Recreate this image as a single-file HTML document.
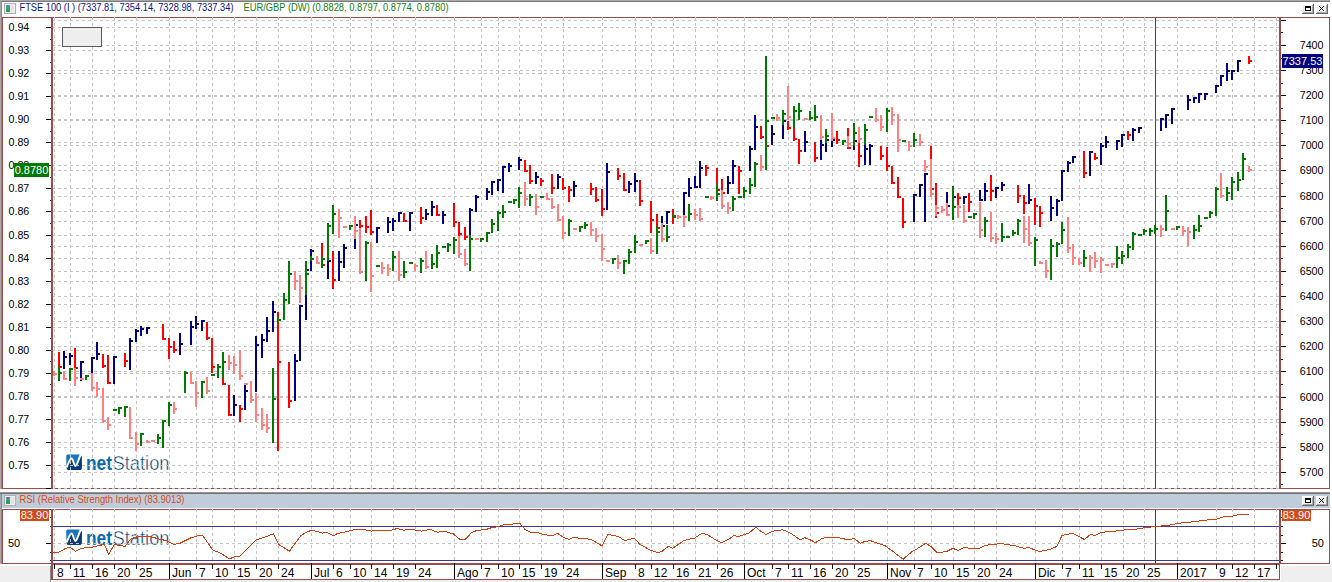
<!DOCTYPE html>
<html><head><meta charset='utf-8'><style>html,body{margin:0;padding:0;background:#fff;overflow:hidden}svg{display:block}</style></head>
<body><svg width='1332' height='582' viewBox='0 0 1332 582' font-family='Liberation Sans, sans-serif' shape-rendering='crispEdges'>
<rect x='0' y='0' width='1332' height='582' fill='#ffffff' />
<rect x='0' y='566' width='51' height='16' fill='#efefef' />
<rect x='50' y='566' width='1' height='16' fill='#8a8a8a' />
<rect x='1281' y='566' width='51' height='16' fill='#efefef' />
<rect x='52' y='580' width='1229' height='2' fill='#efefef' />
<rect x='0' y='0' width='1330' height='1' fill='#a8a8a8' />
<rect x='0' y='1' width='1330' height='1' fill='#7a7a7a' />
<rect x='0' y='0' width='1' height='489' fill='#a8a8a8' />
<rect x='1' y='1' width='1' height='488' fill='#8a8a8a' />
<rect x='0' y='494' width='1' height='70' fill='#a8a8a8' />
<rect x='1' y='494' width='1' height='70' fill='#8a8a8a' />
<rect x='4.5' y='3.5' width='11' height='10' fill='#f0f0f0' stroke='#aab0b6' stroke-width='1'/>
<defs><linearGradient id='ig3' x1='0' y1='0' x2='0' y2='1'><stop offset='0' stop-color='#5a8ab8'/><stop offset='1' stop-color='#30a040'/></linearGradient></defs>
<rect x='6.0' y='5.0' width='4' height='7' fill='url(#ig3)' />
<rect x='10.0' y='5.0' width='4' height='7' fill='#e4e4e4' />
<text x='19.5' y='11.2' font-size='10' fill='#10108a' text-anchor='start' font-weight='normal' textLength='214' lengthAdjust='spacingAndGlyphs' >FTSE 100 (I ) (7337.81, 7354.14, 7328.98, 7337.34)</text>
<text x='243.5' y='11.2' font-size='10' fill='#108010' text-anchor='start' font-weight='normal' textLength='205' lengthAdjust='spacingAndGlyphs' >EUR/GBP (DW) (0.8828, 0.8797, 0.8774, 0.8780)</text>
<rect x='1302' y='4' width='12' height='10' fill='#f0f0f0' />
<rect x='1302' y='4' width='12' height='1' fill='#ffffff' />
<rect x='1302' y='4' width='1' height='10' fill='#ffffff' />
<rect x='1303' y='12' width='10' height='1' fill='#a8a8a8' />
<rect x='1312' y='5' width='1' height='8' fill='#a8a8a8' />
<rect x='1302' y='13' width='12' height='1' fill='#6a6a6a' />
<rect x='1313' y='4' width='1' height='10' fill='#6a6a6a' />
<rect x='1305' y='6' width='6' height='5' fill='#000000' />
<rect x='1306' y='8' width='4' height='2' fill='#ffffff' />
<rect x='1316' y='4' width='12' height='10' fill='#f0f0f0' />
<rect x='1316' y='4' width='12' height='1' fill='#ffffff' />
<rect x='1316' y='4' width='1' height='10' fill='#ffffff' />
<rect x='1317' y='12' width='10' height='1' fill='#a8a8a8' />
<rect x='1326' y='5' width='1' height='8' fill='#a8a8a8' />
<rect x='1316' y='13' width='12' height='1' fill='#6a6a6a' />
<rect x='1327' y='4' width='1' height='10' fill='#6a6a6a' />
<rect x='1319' y='6' width='1' height='1' fill='#000000' />
<rect x='1323' y='6' width='1' height='1' fill='#000000' />
<rect x='1320' y='7' width='1' height='1' fill='#000000' />
<rect x='1322' y='7' width='1' height='1' fill='#000000' />
<rect x='1321' y='8' width='1' height='1' fill='#000000' />
<rect x='1321' y='8' width='1' height='1' fill='#000000' />
<rect x='1322' y='9' width='1' height='1' fill='#000000' />
<rect x='1320' y='9' width='1' height='1' fill='#000000' />
<rect x='1323' y='10' width='1' height='1' fill='#000000' />
<rect x='1319' y='10' width='1' height='1' fill='#000000' />
<line x1='2' y1='17.5' x2='1330' y2='17.5' stroke='#9d4a4a' stroke-width='1'/>
<line x1='2.5' y1='17' x2='2.5' y2='489' stroke='#9d4a4a' stroke-width='1'/>
<line x1='1329.5' y1='17' x2='1329.5' y2='489' stroke='#9d4a4a' stroke-width='1'/>
<rect x='51' y='17' width='2' height='472' fill='#9d4a4a' />
<rect x='1279' y='17' width='2' height='472' fill='#9d4a4a' />
<line x1='2' y1='488.5' x2='51' y2='488.5' stroke='#9d4a4a' stroke-width='1'/>
<line x1='1281' y1='488.5' x2='1330' y2='488.5' stroke='#9d4a4a' stroke-width='1'/>
<path d='M67.50,454.50 L79.60,454.50 L81.80,457.10 L81.80,468.10 Q81.80,469.90 80.00,469.90 L68.50,469.90 Q66.40,469.90 66.40,467.50 L66.20,456.50 Q66.20,454.50 67.50,454.50 Z' fill='#1976be' shape-rendering='geometricPrecision'/>
<path d='M66.50,467.50 C69.00,462.00 70.00,458.50 71.50,458.50 C73.00,458.50 74.00,466.00 75.50,466.00 C77.00,466.00 79.00,458.00 80.80,454.50 L81.80,457.10 L81.80,468.10 Q81.80,469.90 80.00,469.90 L68.50,469.90 Q66.80,469.90 66.50,467.50 Z' fill='#073b7a' shape-rendering='geometricPrecision'/>
<path d='M66.50,467.50 C69.00,462.00 70.00,458.50 71.50,458.50 C73.00,458.50 74.00,466.00 75.50,466.00 C77.00,466.00 79.00,458.00 80.80,454.50' stroke='#ffffff' stroke-width='1.9' fill='none' shape-rendering='geometricPrecision'/>
<text x='86' y='469.7' font-size='20.5' fill='#0a6ab2' text-anchor='start' font-weight='bold' textLength='26' lengthAdjust='spacingAndGlyphs' >net</text>
<text x='112.5' y='469.7' font-size='20.5' fill='#0a3a72' text-anchor='start' font-weight='normal' textLength='57' lengthAdjust='spacingAndGlyphs' stroke='#ffffff' stroke-width='0.45'>Station</text>
<line x1='53' y1='465.5' x2='1279' y2='465.5' stroke='#c4c4c4' stroke-width='1' stroke-dasharray='3,3' stroke-dashoffset='1'/>
<line x1='53' y1='442.5' x2='1279' y2='442.5' stroke='#c4c4c4' stroke-width='1' stroke-dasharray='3,3' stroke-dashoffset='1'/>
<line x1='53' y1='419.5' x2='1279' y2='419.5' stroke='#c4c4c4' stroke-width='1' stroke-dasharray='3,3' stroke-dashoffset='1'/>
<line x1='53' y1='396.5' x2='1279' y2='396.5' stroke='#c4c4c4' stroke-width='1' stroke-dasharray='3,3' stroke-dashoffset='1'/>
<line x1='53' y1='373.5' x2='1279' y2='373.5' stroke='#c4c4c4' stroke-width='1' stroke-dasharray='3,3' stroke-dashoffset='1'/>
<line x1='53' y1='350.5' x2='1279' y2='350.5' stroke='#c4c4c4' stroke-width='1' stroke-dasharray='3,3' stroke-dashoffset='1'/>
<line x1='53' y1='327.5' x2='1279' y2='327.5' stroke='#c4c4c4' stroke-width='1' stroke-dasharray='3,3' stroke-dashoffset='1'/>
<line x1='53' y1='304.5' x2='1279' y2='304.5' stroke='#c4c4c4' stroke-width='1' stroke-dasharray='3,3' stroke-dashoffset='1'/>
<line x1='53' y1='281.5' x2='1279' y2='281.5' stroke='#c4c4c4' stroke-width='1' stroke-dasharray='3,3' stroke-dashoffset='1'/>
<line x1='53' y1='258.5' x2='1279' y2='258.5' stroke='#c4c4c4' stroke-width='1' stroke-dasharray='3,3' stroke-dashoffset='1'/>
<line x1='53' y1='235.5' x2='1279' y2='235.5' stroke='#c4c4c4' stroke-width='1' stroke-dasharray='3,3' stroke-dashoffset='1'/>
<line x1='53' y1='211.5' x2='1279' y2='211.5' stroke='#c4c4c4' stroke-width='1' stroke-dasharray='3,3' stroke-dashoffset='1'/>
<line x1='53' y1='188.5' x2='1279' y2='188.5' stroke='#c4c4c4' stroke-width='1' stroke-dasharray='3,3' stroke-dashoffset='1'/>
<line x1='53' y1='165.5' x2='1279' y2='165.5' stroke='#c4c4c4' stroke-width='1' stroke-dasharray='3,3' stroke-dashoffset='1'/>
<line x1='53' y1='142.5' x2='1279' y2='142.5' stroke='#c4c4c4' stroke-width='1' stroke-dasharray='3,3' stroke-dashoffset='1'/>
<line x1='53' y1='119.5' x2='1279' y2='119.5' stroke='#c4c4c4' stroke-width='1' stroke-dasharray='3,3' stroke-dashoffset='1'/>
<line x1='53' y1='96.5' x2='1279' y2='96.5' stroke='#c4c4c4' stroke-width='1' stroke-dasharray='3,3' stroke-dashoffset='1'/>
<line x1='53' y1='73.5' x2='1279' y2='73.5' stroke='#c4c4c4' stroke-width='1' stroke-dasharray='3,3' stroke-dashoffset='1'/>
<line x1='53' y1='50.5' x2='1279' y2='50.5' stroke='#c4c4c4' stroke-width='1' stroke-dasharray='3,3' stroke-dashoffset='1'/>
<line x1='53' y1='27.5' x2='1279' y2='27.5' stroke='#c4c4c4' stroke-width='1' stroke-dasharray='3,3' stroke-dashoffset='1'/>
<line x1='53' y1='472.5' x2='1279' y2='472.5' stroke='#c4c4c4' stroke-width='1' stroke-dasharray='3,3' stroke-dashoffset='1'/>
<line x1='53' y1='447.5' x2='1279' y2='447.5' stroke='#c4c4c4' stroke-width='1' stroke-dasharray='3,3' stroke-dashoffset='1'/>
<line x1='53' y1='422.5' x2='1279' y2='422.5' stroke='#c4c4c4' stroke-width='1' stroke-dasharray='3,3' stroke-dashoffset='1'/>
<line x1='53' y1='397.5' x2='1279' y2='397.5' stroke='#c4c4c4' stroke-width='1' stroke-dasharray='3,3' stroke-dashoffset='1'/>
<line x1='53' y1='371.5' x2='1279' y2='371.5' stroke='#c4c4c4' stroke-width='1' stroke-dasharray='3,3' stroke-dashoffset='1'/>
<line x1='53' y1='346.5' x2='1279' y2='346.5' stroke='#c4c4c4' stroke-width='1' stroke-dasharray='3,3' stroke-dashoffset='1'/>
<line x1='53' y1='321.5' x2='1279' y2='321.5' stroke='#c4c4c4' stroke-width='1' stroke-dasharray='3,3' stroke-dashoffset='1'/>
<line x1='53' y1='296.5' x2='1279' y2='296.5' stroke='#c4c4c4' stroke-width='1' stroke-dasharray='3,3' stroke-dashoffset='1'/>
<line x1='53' y1='271.5' x2='1279' y2='271.5' stroke='#c4c4c4' stroke-width='1' stroke-dasharray='3,3' stroke-dashoffset='1'/>
<line x1='53' y1='246.5' x2='1279' y2='246.5' stroke='#c4c4c4' stroke-width='1' stroke-dasharray='3,3' stroke-dashoffset='1'/>
<line x1='53' y1='221.5' x2='1279' y2='221.5' stroke='#c4c4c4' stroke-width='1' stroke-dasharray='3,3' stroke-dashoffset='1'/>
<line x1='53' y1='196.5' x2='1279' y2='196.5' stroke='#c4c4c4' stroke-width='1' stroke-dasharray='3,3' stroke-dashoffset='1'/>
<line x1='53' y1='170.5' x2='1279' y2='170.5' stroke='#c4c4c4' stroke-width='1' stroke-dasharray='3,3' stroke-dashoffset='1'/>
<line x1='53' y1='145.5' x2='1279' y2='145.5' stroke='#c4c4c4' stroke-width='1' stroke-dasharray='3,3' stroke-dashoffset='1'/>
<line x1='53' y1='120.5' x2='1279' y2='120.5' stroke='#c4c4c4' stroke-width='1' stroke-dasharray='3,3' stroke-dashoffset='1'/>
<line x1='53' y1='95.5' x2='1279' y2='95.5' stroke='#c4c4c4' stroke-width='1' stroke-dasharray='3,3' stroke-dashoffset='1'/>
<line x1='53' y1='70.5' x2='1279' y2='70.5' stroke='#c4c4c4' stroke-width='1' stroke-dasharray='3,3' stroke-dashoffset='1'/>
<line x1='53' y1='45.5' x2='1279' y2='45.5' stroke='#c4c4c4' stroke-width='1' stroke-dasharray='3,3' stroke-dashoffset='1'/>
<line x1='53' y1='20.5' x2='1279' y2='20.5' stroke='#c4c4c4' stroke-width='1' stroke-dasharray='3,3' stroke-dashoffset='1'/>
<line x1='54.5' y1='17' x2='54.5' y2='488' stroke='#c4c4c4' stroke-width='1' stroke-dasharray='3,3' stroke-dashoffset='0'/>
<line x1='70.5' y1='17' x2='70.5' y2='488' stroke='#c4c4c4' stroke-width='1' stroke-dasharray='3,3' stroke-dashoffset='0'/>
<line x1='92.5' y1='17' x2='92.5' y2='488' stroke='#c4c4c4' stroke-width='1' stroke-dasharray='3,3' stroke-dashoffset='0'/>
<line x1='114.5' y1='17' x2='114.5' y2='488' stroke='#c4c4c4' stroke-width='1' stroke-dasharray='3,3' stroke-dashoffset='0'/>
<line x1='136.5' y1='17' x2='136.5' y2='488' stroke='#c4c4c4' stroke-width='1' stroke-dasharray='3,3' stroke-dashoffset='0'/>
<line x1='169.5' y1='17' x2='169.5' y2='488' stroke='#c4c4c4' stroke-width='1' stroke-dasharray='3,3' stroke-dashoffset='0'/>
<line x1='196.5' y1='17' x2='196.5' y2='488' stroke='#c4c4c4' stroke-width='1' stroke-dasharray='3,3' stroke-dashoffset='0'/>
<line x1='212.5' y1='17' x2='212.5' y2='488' stroke='#c4c4c4' stroke-width='1' stroke-dasharray='3,3' stroke-dashoffset='0'/>
<line x1='234.5' y1='17' x2='234.5' y2='488' stroke='#c4c4c4' stroke-width='1' stroke-dasharray='3,3' stroke-dashoffset='0'/>
<line x1='256.5' y1='17' x2='256.5' y2='488' stroke='#c4c4c4' stroke-width='1' stroke-dasharray='3,3' stroke-dashoffset='0'/>
<line x1='278.5' y1='17' x2='278.5' y2='488' stroke='#c4c4c4' stroke-width='1' stroke-dasharray='3,3' stroke-dashoffset='0'/>
<line x1='311.5' y1='17' x2='311.5' y2='488' stroke='#c4c4c4' stroke-width='1' stroke-dasharray='3,3' stroke-dashoffset='0'/>
<line x1='333.5' y1='17' x2='333.5' y2='488' stroke='#c4c4c4' stroke-width='1' stroke-dasharray='3,3' stroke-dashoffset='0'/>
<line x1='350.5' y1='17' x2='350.5' y2='488' stroke='#c4c4c4' stroke-width='1' stroke-dasharray='3,3' stroke-dashoffset='0'/>
<line x1='371.5' y1='17' x2='371.5' y2='488' stroke='#c4c4c4' stroke-width='1' stroke-dasharray='3,3' stroke-dashoffset='0'/>
<line x1='393.5' y1='17' x2='393.5' y2='488' stroke='#c4c4c4' stroke-width='1' stroke-dasharray='3,3' stroke-dashoffset='0'/>
<line x1='415.5' y1='17' x2='415.5' y2='488' stroke='#c4c4c4' stroke-width='1' stroke-dasharray='3,3' stroke-dashoffset='0'/>
<line x1='454.5' y1='17' x2='454.5' y2='488' stroke='#c4c4c4' stroke-width='1' stroke-dasharray='3,3' stroke-dashoffset='0'/>
<line x1='481.5' y1='17' x2='481.5' y2='488' stroke='#c4c4c4' stroke-width='1' stroke-dasharray='3,3' stroke-dashoffset='0'/>
<line x1='498.5' y1='17' x2='498.5' y2='488' stroke='#c4c4c4' stroke-width='1' stroke-dasharray='3,3' stroke-dashoffset='0'/>
<line x1='519.5' y1='17' x2='519.5' y2='488' stroke='#c4c4c4' stroke-width='1' stroke-dasharray='3,3' stroke-dashoffset='0'/>
<line x1='541.5' y1='17' x2='541.5' y2='488' stroke='#c4c4c4' stroke-width='1' stroke-dasharray='3,3' stroke-dashoffset='0'/>
<line x1='563.5' y1='17' x2='563.5' y2='488' stroke='#c4c4c4' stroke-width='1' stroke-dasharray='3,3' stroke-dashoffset='0'/>
<line x1='602.5' y1='17' x2='602.5' y2='488' stroke='#c4c4c4' stroke-width='1' stroke-dasharray='3,3' stroke-dashoffset='0'/>
<line x1='635.5' y1='17' x2='635.5' y2='488' stroke='#c4c4c4' stroke-width='1' stroke-dasharray='3,3' stroke-dashoffset='0'/>
<line x1='651.5' y1='17' x2='651.5' y2='488' stroke='#c4c4c4' stroke-width='1' stroke-dasharray='3,3' stroke-dashoffset='0'/>
<line x1='673.5' y1='17' x2='673.5' y2='488' stroke='#c4c4c4' stroke-width='1' stroke-dasharray='3,3' stroke-dashoffset='0'/>
<line x1='695.5' y1='17' x2='695.5' y2='488' stroke='#c4c4c4' stroke-width='1' stroke-dasharray='3,3' stroke-dashoffset='0'/>
<line x1='717.5' y1='17' x2='717.5' y2='488' stroke='#c4c4c4' stroke-width='1' stroke-dasharray='3,3' stroke-dashoffset='0'/>
<line x1='744.5' y1='17' x2='744.5' y2='488' stroke='#c4c4c4' stroke-width='1' stroke-dasharray='3,3' stroke-dashoffset='0'/>
<line x1='772.5' y1='17' x2='772.5' y2='488' stroke='#c4c4c4' stroke-width='1' stroke-dasharray='3,3' stroke-dashoffset='0'/>
<line x1='788.5' y1='17' x2='788.5' y2='488' stroke='#c4c4c4' stroke-width='1' stroke-dasharray='3,3' stroke-dashoffset='0'/>
<line x1='810.5' y1='17' x2='810.5' y2='488' stroke='#c4c4c4' stroke-width='1' stroke-dasharray='3,3' stroke-dashoffset='0'/>
<line x1='832.5' y1='17' x2='832.5' y2='488' stroke='#c4c4c4' stroke-width='1' stroke-dasharray='3,3' stroke-dashoffset='0'/>
<line x1='854.5' y1='17' x2='854.5' y2='488' stroke='#c4c4c4' stroke-width='1' stroke-dasharray='3,3' stroke-dashoffset='0'/>
<line x1='887.5' y1='17' x2='887.5' y2='488' stroke='#c4c4c4' stroke-width='1' stroke-dasharray='3,3' stroke-dashoffset='0'/>
<line x1='914.5' y1='17' x2='914.5' y2='488' stroke='#c4c4c4' stroke-width='1' stroke-dasharray='3,3' stroke-dashoffset='0'/>
<line x1='931.5' y1='17' x2='931.5' y2='488' stroke='#c4c4c4' stroke-width='1' stroke-dasharray='3,3' stroke-dashoffset='0'/>
<line x1='953.5' y1='17' x2='953.5' y2='488' stroke='#c4c4c4' stroke-width='1' stroke-dasharray='3,3' stroke-dashoffset='0'/>
<line x1='974.5' y1='17' x2='974.5' y2='488' stroke='#c4c4c4' stroke-width='1' stroke-dasharray='3,3' stroke-dashoffset='0'/>
<line x1='996.5' y1='17' x2='996.5' y2='488' stroke='#c4c4c4' stroke-width='1' stroke-dasharray='3,3' stroke-dashoffset='0'/>
<line x1='1035.5' y1='17' x2='1035.5' y2='488' stroke='#c4c4c4' stroke-width='1' stroke-dasharray='3,3' stroke-dashoffset='0'/>
<line x1='1062.5' y1='17' x2='1062.5' y2='488' stroke='#c4c4c4' stroke-width='1' stroke-dasharray='3,3' stroke-dashoffset='0'/>
<line x1='1079.5' y1='17' x2='1079.5' y2='488' stroke='#c4c4c4' stroke-width='1' stroke-dasharray='3,3' stroke-dashoffset='0'/>
<line x1='1101.5' y1='17' x2='1101.5' y2='488' stroke='#c4c4c4' stroke-width='1' stroke-dasharray='3,3' stroke-dashoffset='0'/>
<line x1='1123.5' y1='17' x2='1123.5' y2='488' stroke='#c4c4c4' stroke-width='1' stroke-dasharray='3,3' stroke-dashoffset='0'/>
<line x1='1144.5' y1='17' x2='1144.5' y2='488' stroke='#c4c4c4' stroke-width='1' stroke-dasharray='3,3' stroke-dashoffset='0'/>
<line x1='1177.5' y1='17' x2='1177.5' y2='488' stroke='#c4c4c4' stroke-width='1' stroke-dasharray='3,3' stroke-dashoffset='0'/>
<line x1='1216.5' y1='17' x2='1216.5' y2='488' stroke='#c4c4c4' stroke-width='1' stroke-dasharray='3,3' stroke-dashoffset='0'/>
<line x1='1232.5' y1='17' x2='1232.5' y2='488' stroke='#c4c4c4' stroke-width='1' stroke-dasharray='3,3' stroke-dashoffset='0'/>
<line x1='1254.5' y1='17' x2='1254.5' y2='488' stroke='#c4c4c4' stroke-width='1' stroke-dasharray='3,3' stroke-dashoffset='0'/>
<line x1='1276.5' y1='17' x2='1276.5' y2='488' stroke='#c4c4c4' stroke-width='1' stroke-dasharray='3,3' stroke-dashoffset='0'/>
<line x1='53' y1='488.5' x2='1279' y2='488.5' stroke='#c4c4c4' stroke-width='1' stroke-dasharray='3,3' stroke-dashoffset='1'/>
<line x1='53' y1='488.5' x2='1279' y2='488.5' stroke='#9d4a4a' stroke-width='1' stroke-dasharray='3,3' stroke-dashoffset='4'/>
<line x1='46' y1='465.5' x2='51' y2='465.5' stroke='#000' stroke-width='1'/>
<line x1='50' y1='453.5' x2='51' y2='453.5' stroke='#000' stroke-width='1'/>
<text x='8.5' y='469' font-size='10.7' fill='#000' text-anchor='start' font-weight='normal' >0.75</text>
<line x1='46' y1='442.5' x2='51' y2='442.5' stroke='#000' stroke-width='1'/>
<line x1='50' y1='430.5' x2='51' y2='430.5' stroke='#000' stroke-width='1'/>
<text x='8.5' y='446' font-size='10.7' fill='#000' text-anchor='start' font-weight='normal' >0.76</text>
<line x1='46' y1='419.5' x2='51' y2='419.5' stroke='#000' stroke-width='1'/>
<line x1='50' y1='407.5' x2='51' y2='407.5' stroke='#000' stroke-width='1'/>
<text x='8.5' y='423' font-size='10.7' fill='#000' text-anchor='start' font-weight='normal' >0.77</text>
<line x1='46' y1='396.5' x2='51' y2='396.5' stroke='#000' stroke-width='1'/>
<line x1='50' y1='384.5' x2='51' y2='384.5' stroke='#000' stroke-width='1'/>
<text x='8.5' y='400' font-size='10.7' fill='#000' text-anchor='start' font-weight='normal' >0.78</text>
<line x1='46' y1='373.5' x2='51' y2='373.5' stroke='#000' stroke-width='1'/>
<line x1='50' y1='361.5' x2='51' y2='361.5' stroke='#000' stroke-width='1'/>
<text x='8.5' y='377' font-size='10.7' fill='#000' text-anchor='start' font-weight='normal' >0.79</text>
<line x1='46' y1='350.5' x2='51' y2='350.5' stroke='#000' stroke-width='1'/>
<line x1='50' y1='338.5' x2='51' y2='338.5' stroke='#000' stroke-width='1'/>
<text x='8.5' y='354' font-size='10.7' fill='#000' text-anchor='start' font-weight='normal' >0.80</text>
<line x1='46' y1='327.5' x2='51' y2='327.5' stroke='#000' stroke-width='1'/>
<line x1='50' y1='315.5' x2='51' y2='315.5' stroke='#000' stroke-width='1'/>
<text x='8.5' y='331' font-size='10.7' fill='#000' text-anchor='start' font-weight='normal' >0.81</text>
<line x1='46' y1='304.5' x2='51' y2='304.5' stroke='#000' stroke-width='1'/>
<line x1='50' y1='292.5' x2='51' y2='292.5' stroke='#000' stroke-width='1'/>
<text x='8.5' y='308' font-size='10.7' fill='#000' text-anchor='start' font-weight='normal' >0.82</text>
<line x1='46' y1='281.5' x2='51' y2='281.5' stroke='#000' stroke-width='1'/>
<line x1='50' y1='269.5' x2='51' y2='269.5' stroke='#000' stroke-width='1'/>
<text x='8.5' y='285' font-size='10.7' fill='#000' text-anchor='start' font-weight='normal' >0.83</text>
<line x1='46' y1='258.5' x2='51' y2='258.5' stroke='#000' stroke-width='1'/>
<line x1='50' y1='246.5' x2='51' y2='246.5' stroke='#000' stroke-width='1'/>
<text x='8.5' y='262' font-size='10.7' fill='#000' text-anchor='start' font-weight='normal' >0.84</text>
<line x1='46' y1='235.5' x2='51' y2='235.5' stroke='#000' stroke-width='1'/>
<line x1='50' y1='223.5' x2='51' y2='223.5' stroke='#000' stroke-width='1'/>
<text x='8.5' y='239' font-size='10.7' fill='#000' text-anchor='start' font-weight='normal' >0.85</text>
<line x1='46' y1='211.5' x2='51' y2='211.5' stroke='#000' stroke-width='1'/>
<line x1='50' y1='200.5' x2='51' y2='200.5' stroke='#000' stroke-width='1'/>
<text x='8.5' y='215' font-size='10.7' fill='#000' text-anchor='start' font-weight='normal' >0.86</text>
<line x1='46' y1='188.5' x2='51' y2='188.5' stroke='#000' stroke-width='1'/>
<line x1='50' y1='177.5' x2='51' y2='177.5' stroke='#000' stroke-width='1'/>
<text x='8.5' y='192' font-size='10.7' fill='#000' text-anchor='start' font-weight='normal' >0.87</text>
<line x1='46' y1='165.5' x2='51' y2='165.5' stroke='#000' stroke-width='1'/>
<line x1='50' y1='154.5' x2='51' y2='154.5' stroke='#000' stroke-width='1'/>
<text x='8.5' y='169' font-size='10.7' fill='#000' text-anchor='start' font-weight='normal' >0.88</text>
<line x1='46' y1='142.5' x2='51' y2='142.5' stroke='#000' stroke-width='1'/>
<line x1='50' y1='131.5' x2='51' y2='131.5' stroke='#000' stroke-width='1'/>
<text x='8.5' y='146' font-size='10.7' fill='#000' text-anchor='start' font-weight='normal' >0.89</text>
<line x1='46' y1='119.5' x2='51' y2='119.5' stroke='#000' stroke-width='1'/>
<line x1='50' y1='108.5' x2='51' y2='108.5' stroke='#000' stroke-width='1'/>
<text x='8.5' y='123' font-size='10.7' fill='#000' text-anchor='start' font-weight='normal' >0.90</text>
<line x1='46' y1='96.5' x2='51' y2='96.5' stroke='#000' stroke-width='1'/>
<line x1='50' y1='85.5' x2='51' y2='85.5' stroke='#000' stroke-width='1'/>
<text x='8.5' y='100' font-size='10.7' fill='#000' text-anchor='start' font-weight='normal' >0.91</text>
<line x1='46' y1='73.5' x2='51' y2='73.5' stroke='#000' stroke-width='1'/>
<line x1='50' y1='62.5' x2='51' y2='62.5' stroke='#000' stroke-width='1'/>
<text x='8.5' y='77' font-size='10.7' fill='#000' text-anchor='start' font-weight='normal' >0.92</text>
<line x1='46' y1='50.5' x2='51' y2='50.5' stroke='#000' stroke-width='1'/>
<line x1='50' y1='39.5' x2='51' y2='39.5' stroke='#000' stroke-width='1'/>
<text x='8.5' y='54' font-size='10.7' fill='#000' text-anchor='start' font-weight='normal' >0.93</text>
<line x1='46' y1='27.5' x2='51' y2='27.5' stroke='#000' stroke-width='1'/>
<text x='8.5' y='31' font-size='10.7' fill='#000' text-anchor='start' font-weight='normal' >0.94</text>
<line x1='50' y1='477.5' x2='51' y2='477.5' stroke='#000' stroke-width='1'/>
<line x1='46' y1='488.5' x2='51' y2='488.5' stroke='#000' stroke-width='1'/>
<line x1='1281' y1='472.5' x2='1286' y2='472.5' stroke='#000' stroke-width='1'/>
<text x='1323.5' y='476' font-size='10.7' fill='#000' text-anchor='end' font-weight='normal' >5700</text>
<line x1='1281' y1='459.5' x2='1283' y2='459.5' stroke='#000' stroke-width='1'/>
<line x1='1281' y1='447.5' x2='1286' y2='447.5' stroke='#000' stroke-width='1'/>
<text x='1323.5' y='451' font-size='10.7' fill='#000' text-anchor='end' font-weight='normal' >5800</text>
<line x1='1281' y1='434.5' x2='1283' y2='434.5' stroke='#000' stroke-width='1'/>
<line x1='1281' y1='422.5' x2='1286' y2='422.5' stroke='#000' stroke-width='1'/>
<text x='1323.5' y='426' font-size='10.7' fill='#000' text-anchor='end' font-weight='normal' >5900</text>
<line x1='1281' y1='409.5' x2='1283' y2='409.5' stroke='#000' stroke-width='1'/>
<line x1='1281' y1='397.5' x2='1286' y2='397.5' stroke='#000' stroke-width='1'/>
<text x='1323.5' y='401' font-size='10.7' fill='#000' text-anchor='end' font-weight='normal' >6000</text>
<line x1='1281' y1='384.5' x2='1283' y2='384.5' stroke='#000' stroke-width='1'/>
<line x1='1281' y1='371.5' x2='1286' y2='371.5' stroke='#000' stroke-width='1'/>
<text x='1323.5' y='375' font-size='10.7' fill='#000' text-anchor='end' font-weight='normal' >6100</text>
<line x1='1281' y1='359.5' x2='1283' y2='359.5' stroke='#000' stroke-width='1'/>
<line x1='1281' y1='346.5' x2='1286' y2='346.5' stroke='#000' stroke-width='1'/>
<text x='1323.5' y='350' font-size='10.7' fill='#000' text-anchor='end' font-weight='normal' >6200</text>
<line x1='1281' y1='334.5' x2='1283' y2='334.5' stroke='#000' stroke-width='1'/>
<line x1='1281' y1='321.5' x2='1286' y2='321.5' stroke='#000' stroke-width='1'/>
<text x='1323.5' y='325' font-size='10.7' fill='#000' text-anchor='end' font-weight='normal' >6300</text>
<line x1='1281' y1='309.5' x2='1283' y2='309.5' stroke='#000' stroke-width='1'/>
<line x1='1281' y1='296.5' x2='1286' y2='296.5' stroke='#000' stroke-width='1'/>
<text x='1323.5' y='300' font-size='10.7' fill='#000' text-anchor='end' font-weight='normal' >6400</text>
<line x1='1281' y1='284.5' x2='1283' y2='284.5' stroke='#000' stroke-width='1'/>
<line x1='1281' y1='271.5' x2='1286' y2='271.5' stroke='#000' stroke-width='1'/>
<text x='1323.5' y='275' font-size='10.7' fill='#000' text-anchor='end' font-weight='normal' >6500</text>
<line x1='1281' y1='258.5' x2='1283' y2='258.5' stroke='#000' stroke-width='1'/>
<line x1='1281' y1='246.5' x2='1286' y2='246.5' stroke='#000' stroke-width='1'/>
<text x='1323.5' y='250' font-size='10.7' fill='#000' text-anchor='end' font-weight='normal' >6600</text>
<line x1='1281' y1='233.5' x2='1283' y2='233.5' stroke='#000' stroke-width='1'/>
<line x1='1281' y1='221.5' x2='1286' y2='221.5' stroke='#000' stroke-width='1'/>
<text x='1323.5' y='225' font-size='10.7' fill='#000' text-anchor='end' font-weight='normal' >6700</text>
<line x1='1281' y1='208.5' x2='1283' y2='208.5' stroke='#000' stroke-width='1'/>
<line x1='1281' y1='196.5' x2='1286' y2='196.5' stroke='#000' stroke-width='1'/>
<text x='1323.5' y='200' font-size='10.7' fill='#000' text-anchor='end' font-weight='normal' >6800</text>
<line x1='1281' y1='183.5' x2='1283' y2='183.5' stroke='#000' stroke-width='1'/>
<line x1='1281' y1='170.5' x2='1286' y2='170.5' stroke='#000' stroke-width='1'/>
<text x='1323.5' y='174' font-size='10.7' fill='#000' text-anchor='end' font-weight='normal' >6900</text>
<line x1='1281' y1='158.5' x2='1283' y2='158.5' stroke='#000' stroke-width='1'/>
<line x1='1281' y1='145.5' x2='1286' y2='145.5' stroke='#000' stroke-width='1'/>
<text x='1323.5' y='149' font-size='10.7' fill='#000' text-anchor='end' font-weight='normal' >7000</text>
<line x1='1281' y1='133.5' x2='1283' y2='133.5' stroke='#000' stroke-width='1'/>
<line x1='1281' y1='120.5' x2='1286' y2='120.5' stroke='#000' stroke-width='1'/>
<text x='1323.5' y='124' font-size='10.7' fill='#000' text-anchor='end' font-weight='normal' >7100</text>
<line x1='1281' y1='108.5' x2='1283' y2='108.5' stroke='#000' stroke-width='1'/>
<line x1='1281' y1='95.5' x2='1286' y2='95.5' stroke='#000' stroke-width='1'/>
<text x='1323.5' y='99' font-size='10.7' fill='#000' text-anchor='end' font-weight='normal' >7200</text>
<line x1='1281' y1='83.5' x2='1283' y2='83.5' stroke='#000' stroke-width='1'/>
<line x1='1281' y1='70.5' x2='1286' y2='70.5' stroke='#000' stroke-width='1'/>
<text x='1323.5' y='74' font-size='10.7' fill='#000' text-anchor='end' font-weight='normal' >7300</text>
<line x1='1281' y1='58.5' x2='1283' y2='58.5' stroke='#000' stroke-width='1'/>
<line x1='1281' y1='45.5' x2='1286' y2='45.5' stroke='#000' stroke-width='1'/>
<text x='1323.5' y='49' font-size='10.7' fill='#000' text-anchor='end' font-weight='normal' >7400</text>
<line x1='1281' y1='32.5' x2='1283' y2='32.5' stroke='#000' stroke-width='1'/>
<line x1='1281' y1='20.5' x2='1286' y2='20.5' stroke='#000' stroke-width='1'/>
<line x1='1281' y1='484.5' x2='1283' y2='484.5' stroke='#000' stroke-width='1'/>
<rect x='62.5' y='27.5' width='39' height='19' fill='#eeeeee' stroke='#5a5a5a' stroke-width='1.2'/>
<rect x='58' y='352' width='2' height='16' fill='#ff0000'/>
<rect x='60' y='366' width='2' height='2' fill='#ff0000'/>
<rect x='63' y='351' width='2' height='18' fill='#000080'/>
<rect x='65' y='356' width='2' height='2' fill='#000080'/>
<rect x='69' y='353' width='2' height='12' fill='#000080'/>
<rect x='71' y='355' width='2' height='2' fill='#000080'/>
<rect x='74' y='348' width='2' height='21' fill='#ff0000'/>
<rect x='76' y='367' width='2' height='2' fill='#ff0000'/>
<rect x='80' y='361' width='2' height='20' fill='#000080'/>
<rect x='82' y='361' width='2' height='2' fill='#000080'/>
<rect x='91' y='357' width='2' height='16' fill='#000080'/>
<rect x='93' y='357' width='2' height='2' fill='#000080'/>
<rect x='96' y='342' width='2' height='18' fill='#000080'/>
<rect x='98' y='353' width='2' height='2' fill='#000080'/>
<rect x='102' y='354' width='2' height='14' fill='#ff0000'/>
<rect x='104' y='365' width='2' height='2' fill='#ff0000'/>
<rect x='107' y='355' width='2' height='29' fill='#ff0000'/>
<rect x='109' y='382' width='2' height='2' fill='#ff0000'/>
<rect x='113' y='356' width='2' height='28' fill='#000080'/>
<rect x='115' y='356' width='2' height='2' fill='#000080'/>
<rect x='124' y='353' width='2' height='14' fill='#ff0000'/>
<rect x='126' y='360' width='2' height='2' fill='#ff0000'/>
<rect x='129' y='338' width='2' height='32' fill='#000080'/>
<rect x='131' y='340' width='2' height='2' fill='#000080'/>
<rect x='135' y='329' width='2' height='13' fill='#000080'/>
<rect x='137' y='330' width='2' height='2' fill='#000080'/>
<rect x='140' y='326' width='2' height='10' fill='#000080'/>
<rect x='142' y='328' width='2' height='2' fill='#000080'/>
<rect x='146' y='327' width='2' height='7' fill='#000080'/>
<rect x='148' y='327' width='2' height='2' fill='#000080'/>
<rect x='162' y='324' width='2' height='16' fill='#ff0000'/>
<rect x='164' y='338' width='2' height='2' fill='#ff0000'/>
<rect x='168' y='338' width='2' height='21' fill='#ff0000'/>
<rect x='170' y='346' width='2' height='2' fill='#ff0000'/>
<rect x='173' y='341' width='2' height='12' fill='#ff0000'/>
<rect x='175' y='349' width='2' height='2' fill='#ff0000'/>
<rect x='179' y='333' width='2' height='22' fill='#000080'/>
<rect x='181' y='343' width='2' height='2' fill='#000080'/>
<rect x='190' y='321' width='2' height='24' fill='#000080'/>
<rect x='192' y='326' width='2' height='2' fill='#000080'/>
<rect x='195' y='316' width='2' height='13' fill='#000080'/>
<rect x='197' y='323' width='2' height='2' fill='#000080'/>
<rect x='201' y='320' width='2' height='11' fill='#000080'/>
<rect x='203' y='320' width='2' height='2' fill='#000080'/>
<rect x='206' y='322' width='2' height='18' fill='#ff0000'/>
<rect x='208' y='337' width='2' height='2' fill='#ff0000'/>
<rect x='211' y='338' width='2' height='35' fill='#ff0000'/>
<rect x='213' y='366' width='2' height='2' fill='#ff0000'/>
<rect x='222' y='378' width='2' height='7' fill='#ff0000'/>
<rect x='224' y='383' width='2' height='2' fill='#ff0000'/>
<rect x='228' y='385' width='2' height='31' fill='#ff0000'/>
<rect x='230' y='414' width='2' height='2' fill='#ff0000'/>
<rect x='233' y='395' width='2' height='21' fill='#000080'/>
<rect x='235' y='404' width='2' height='2' fill='#000080'/>
<rect x='239' y='405' width='2' height='17' fill='#ff0000'/>
<rect x='241' y='408' width='2' height='2' fill='#ff0000'/>
<rect x='244' y='384' width='2' height='26' fill='#000080'/>
<rect x='246' y='390' width='2' height='2' fill='#000080'/>
<rect x='255' y='336' width='2' height='56' fill='#000080'/>
<rect x='257' y='344' width='2' height='2' fill='#000080'/>
<rect x='261' y='334' width='2' height='24' fill='#000080'/>
<rect x='263' y='339' width='2' height='2' fill='#000080'/>
<rect x='266' y='317' width='2' height='25' fill='#000080'/>
<rect x='268' y='330' width='2' height='2' fill='#000080'/>
<rect x='272' y='301' width='2' height='31' fill='#000080'/>
<rect x='274' y='311' width='2' height='2' fill='#000080'/>
<rect x='277' y='312' width='2' height='139' fill='#ff0000'/>
<rect x='279' y='361' width='2' height='2' fill='#ff0000'/>
<rect x='288' y='362' width='2' height='46' fill='#ff0000'/>
<rect x='290' y='400' width='2' height='2' fill='#ff0000'/>
<rect x='294' y='354' width='2' height='47' fill='#000080'/>
<rect x='296' y='360' width='2' height='2' fill='#000080'/>
<rect x='299' y='305' width='2' height='56' fill='#000080'/>
<rect x='301' y='305' width='2' height='2' fill='#000080'/>
<rect x='305' y='268' width='2' height='52' fill='#000080'/>
<rect x='307' y='269' width='2' height='2' fill='#000080'/>
<rect x='310' y='249' width='2' height='22' fill='#000080'/>
<rect x='312' y='250' width='2' height='2' fill='#000080'/>
<rect x='321' y='243' width='2' height='23' fill='#ff0000'/>
<rect x='323' y='264' width='2' height='2' fill='#ff0000'/>
<rect x='327' y='260' width='2' height='19' fill='#000080'/>
<rect x='329' y='260' width='2' height='2' fill='#000080'/>
<rect x='332' y='251' width='2' height='38' fill='#ff0000'/>
<rect x='334' y='279' width='2' height='2' fill='#ff0000'/>
<rect x='338' y='251' width='2' height='30' fill='#000080'/>
<rect x='340' y='261' width='2' height='2' fill='#000080'/>
<rect x='343' y='244' width='2' height='24' fill='#000080'/>
<rect x='345' y='247' width='2' height='2' fill='#000080'/>
<rect x='354' y='224' width='2' height='25' fill='#000080'/>
<rect x='356' y='224' width='2' height='2' fill='#000080'/>
<rect x='359' y='220' width='2' height='13' fill='#ff0000'/>
<rect x='361' y='225' width='2' height='2' fill='#ff0000'/>
<rect x='365' y='216' width='2' height='17' fill='#ff0000'/>
<rect x='367' y='226' width='2' height='2' fill='#ff0000'/>
<rect x='370' y='210' width='2' height='25' fill='#ff0000'/>
<rect x='372' y='231' width='2' height='2' fill='#ff0000'/>
<rect x='376' y='227' width='2' height='16' fill='#000080'/>
<rect x='378' y='227' width='2' height='2' fill='#000080'/>
<rect x='387' y='217' width='2' height='16' fill='#000080'/>
<rect x='389' y='221' width='2' height='2' fill='#000080'/>
<rect x='392' y='218' width='2' height='13' fill='#000080'/>
<rect x='394' y='220' width='2' height='2' fill='#000080'/>
<rect x='398' y='212' width='2' height='10' fill='#000080'/>
<rect x='400' y='212' width='2' height='2' fill='#000080'/>
<rect x='403' y='213' width='2' height='9' fill='#ff0000'/>
<rect x='405' y='220' width='2' height='2' fill='#ff0000'/>
<rect x='409' y='212' width='2' height='19' fill='#000080'/>
<rect x='411' y='212' width='2' height='2' fill='#000080'/>
<rect x='420' y='207' width='2' height='17' fill='#ff0000'/>
<rect x='422' y='217' width='2' height='2' fill='#ff0000'/>
<rect x='425' y='209' width='2' height='11' fill='#000080'/>
<rect x='427' y='213' width='2' height='2' fill='#000080'/>
<rect x='431' y='201' width='2' height='15' fill='#000080'/>
<rect x='433' y='206' width='2' height='2' fill='#000080'/>
<rect x='436' y='205' width='2' height='11' fill='#ff0000'/>
<rect x='438' y='214' width='2' height='2' fill='#ff0000'/>
<rect x='442' y='211' width='2' height='13' fill='#000080'/>
<rect x='444' y='214' width='2' height='2' fill='#000080'/>
<rect x='453' y='203' width='2' height='24' fill='#ff0000'/>
<rect x='455' y='221' width='2' height='2' fill='#ff0000'/>
<rect x='458' y='222' width='2' height='14' fill='#ff0000'/>
<rect x='460' y='233' width='2' height='2' fill='#ff0000'/>
<rect x='464' y='227' width='2' height='13' fill='#ff0000'/>
<rect x='466' y='236' width='2' height='2' fill='#ff0000'/>
<rect x='469' y='208' width='2' height='28' fill='#000080'/>
<rect x='471' y='209' width='2' height='2' fill='#000080'/>
<rect x='475' y='195' width='2' height='17' fill='#000080'/>
<rect x='477' y='196' width='2' height='2' fill='#000080'/>
<rect x='486' y='188' width='2' height='12' fill='#000080'/>
<rect x='488' y='191' width='2' height='2' fill='#000080'/>
<rect x='491' y='181' width='2' height='14' fill='#000080'/>
<rect x='493' y='181' width='2' height='2' fill='#000080'/>
<rect x='497' y='179' width='2' height='12' fill='#000080'/>
<rect x='499' y='179' width='2' height='2' fill='#000080'/>
<rect x='502' y='166' width='2' height='27' fill='#000080'/>
<rect x='504' y='166' width='2' height='2' fill='#000080'/>
<rect x='508' y='163' width='2' height='9' fill='#000080'/>
<rect x='510' y='165' width='2' height='2' fill='#000080'/>
<rect x='518' y='157' width='2' height='13' fill='#000080'/>
<rect x='520' y='159' width='2' height='2' fill='#000080'/>
<rect x='524' y='160' width='2' height='12' fill='#ff0000'/>
<rect x='526' y='170' width='2' height='2' fill='#ff0000'/>
<rect x='529' y='165' width='2' height='19' fill='#ff0000'/>
<rect x='531' y='180' width='2' height='2' fill='#ff0000'/>
<rect x='535' y='172' width='2' height='12' fill='#000080'/>
<rect x='537' y='176' width='2' height='2' fill='#000080'/>
<rect x='540' y='178' width='2' height='8' fill='#ff0000'/>
<rect x='542' y='180' width='2' height='2' fill='#ff0000'/>
<rect x='551' y='174' width='2' height='20' fill='#ff0000'/>
<rect x='553' y='187' width='2' height='2' fill='#ff0000'/>
<rect x='557' y='174' width='2' height='15' fill='#000080'/>
<rect x='559' y='176' width='2' height='2' fill='#000080'/>
<rect x='562' y='178' width='2' height='12' fill='#ff0000'/>
<rect x='564' y='187' width='2' height='2' fill='#ff0000'/>
<rect x='568' y='186' width='2' height='16' fill='#ff0000'/>
<rect x='570' y='189' width='2' height='2' fill='#ff0000'/>
<rect x='573' y='181' width='2' height='16' fill='#000080'/>
<rect x='575' y='185' width='2' height='2' fill='#000080'/>
<rect x='590' y='183' width='2' height='12' fill='#ff0000'/>
<rect x='592' y='188' width='2' height='2' fill='#ff0000'/>
<rect x='595' y='187' width='2' height='15' fill='#ff0000'/>
<rect x='597' y='199' width='2' height='2' fill='#ff0000'/>
<rect x='601' y='189' width='2' height='27' fill='#ff0000'/>
<rect x='603' y='208' width='2' height='2' fill='#ff0000'/>
<rect x='606' y='163' width='2' height='47' fill='#000080'/>
<rect x='608' y='171' width='2' height='2' fill='#000080'/>
<rect x='617' y='168' width='2' height='12' fill='#ff0000'/>
<rect x='619' y='175' width='2' height='2' fill='#ff0000'/>
<rect x='623' y='173' width='2' height='18' fill='#ff0000'/>
<rect x='625' y='189' width='2' height='2' fill='#ff0000'/>
<rect x='628' y='181' width='2' height='12' fill='#000080'/>
<rect x='630' y='183' width='2' height='2' fill='#000080'/>
<rect x='634' y='173' width='2' height='19' fill='#000080'/>
<rect x='636' y='180' width='2' height='2' fill='#000080'/>
<rect x='639' y='180' width='2' height='26' fill='#ff0000'/>
<rect x='641' y='200' width='2' height='2' fill='#ff0000'/>
<rect x='650' y='201' width='2' height='32' fill='#ff0000'/>
<rect x='652' y='219' width='2' height='2' fill='#ff0000'/>
<rect x='656' y='214' width='2' height='15' fill='#ff0000'/>
<rect x='658' y='227' width='2' height='2' fill='#ff0000'/>
<rect x='661' y='216' width='2' height='11' fill='#000080'/>
<rect x='663' y='225' width='2' height='2' fill='#000080'/>
<rect x='666' y='211' width='2' height='13' fill='#000080'/>
<rect x='668' y='211' width='2' height='2' fill='#000080'/>
<rect x='672' y='209' width='2' height='15' fill='#ff0000'/>
<rect x='674' y='216' width='2' height='2' fill='#ff0000'/>
<rect x='683' y='192' width='2' height='23' fill='#000080'/>
<rect x='685' y='192' width='2' height='2' fill='#000080'/>
<rect x='688' y='178' width='2' height='19' fill='#000080'/>
<rect x='690' y='187' width='2' height='2' fill='#000080'/>
<rect x='694' y='176' width='2' height='12' fill='#000080'/>
<rect x='696' y='186' width='2' height='2' fill='#000080'/>
<rect x='699' y='161' width='2' height='27' fill='#000080'/>
<rect x='701' y='167' width='2' height='2' fill='#000080'/>
<rect x='705' y='165' width='2' height='11' fill='#ff0000'/>
<rect x='707' y='167' width='2' height='2' fill='#ff0000'/>
<rect x='716' y='168' width='2' height='23' fill='#ff0000'/>
<rect x='718' y='189' width='2' height='2' fill='#ff0000'/>
<rect x='721' y='179' width='2' height='15' fill='#ff0000'/>
<rect x='723' y='192' width='2' height='2' fill='#ff0000'/>
<rect x='727' y='176' width='2' height='18' fill='#000080'/>
<rect x='729' y='182' width='2' height='2' fill='#000080'/>
<rect x='732' y='160' width='2' height='24' fill='#000080'/>
<rect x='734' y='165' width='2' height='2' fill='#000080'/>
<rect x='738' y='166' width='2' height='28' fill='#ff0000'/>
<rect x='740' y='170' width='2' height='2' fill='#ff0000'/>
<rect x='749' y='146' width='2' height='25' fill='#000080'/>
<rect x='751' y='148' width='2' height='2' fill='#000080'/>
<rect x='754' y='115' width='2' height='35' fill='#000080'/>
<rect x='756' y='126' width='2' height='2' fill='#000080'/>
<rect x='760' y='126' width='2' height='13' fill='#ff0000'/>
<rect x='762' y='136' width='2' height='2' fill='#ff0000'/>
<rect x='765' y='140' width='2' height='7' fill='#ff0000'/>
<rect x='767' y='145' width='2' height='2' fill='#ff0000'/>
<rect x='771' y='125' width='2' height='20' fill='#000080'/>
<rect x='773' y='133' width='2' height='2' fill='#000080'/>
<rect x='782' y='120' width='2' height='19' fill='#000080'/>
<rect x='784' y='120' width='2' height='2' fill='#000080'/>
<rect x='787' y='121' width='2' height='9' fill='#ff0000'/>
<rect x='789' y='127' width='2' height='2' fill='#ff0000'/>
<rect x='793' y='128' width='2' height='13' fill='#ff0000'/>
<rect x='795' y='138' width='2' height='2' fill='#ff0000'/>
<rect x='798' y='139' width='2' height='25' fill='#ff0000'/>
<rect x='800' y='150' width='2' height='2' fill='#ff0000'/>
<rect x='804' y='131' width='2' height='21' fill='#000080'/>
<rect x='806' y='141' width='2' height='2' fill='#000080'/>
<rect x='814' y='142' width='2' height='20' fill='#ff0000'/>
<rect x='816' y='157' width='2' height='2' fill='#ff0000'/>
<rect x='820' y='140' width='2' height='20' fill='#000080'/>
<rect x='822' y='144' width='2' height='2' fill='#000080'/>
<rect x='825' y='139' width='2' height='13' fill='#000080'/>
<rect x='827' y='139' width='2' height='2' fill='#000080'/>
<rect x='831' y='139' width='2' height='8' fill='#000080'/>
<rect x='833' y='139' width='2' height='2' fill='#000080'/>
<rect x='836' y='131' width='2' height='13' fill='#ff0000'/>
<rect x='838' y='139' width='2' height='2' fill='#ff0000'/>
<rect x='847' y='128' width='2' height='21' fill='#ff0000'/>
<rect x='849' y='147' width='2' height='2' fill='#ff0000'/>
<rect x='853' y='139' width='2' height='11' fill='#000080'/>
<rect x='855' y='140' width='2' height='2' fill='#000080'/>
<rect x='858' y='143' width='2' height='24' fill='#ff0000'/>
<rect x='860' y='155' width='2' height='2' fill='#ff0000'/>
<rect x='864' y='145' width='2' height='20' fill='#000080'/>
<rect x='866' y='148' width='2' height='2' fill='#000080'/>
<rect x='869' y='144' width='2' height='21' fill='#000080'/>
<rect x='871' y='145' width='2' height='2' fill='#000080'/>
<rect x='880' y='146' width='2' height='14' fill='#ff0000'/>
<rect x='882' y='155' width='2' height='2' fill='#ff0000'/>
<rect x='886' y='147' width='2' height='24' fill='#ff0000'/>
<rect x='888' y='165' width='2' height='2' fill='#ff0000'/>
<rect x='891' y='166' width='2' height='18' fill='#ff0000'/>
<rect x='893' y='182' width='2' height='2' fill='#ff0000'/>
<rect x='897' y='177' width='2' height='21' fill='#ff0000'/>
<rect x='899' y='196' width='2' height='2' fill='#ff0000'/>
<rect x='902' y='198' width='2' height='30' fill='#ff0000'/>
<rect x='904' y='221' width='2' height='2' fill='#ff0000'/>
<rect x='913' y='194' width='2' height='28' fill='#000080'/>
<rect x='915' y='194' width='2' height='2' fill='#000080'/>
<rect x='919' y='184' width='2' height='13' fill='#000080'/>
<rect x='921' y='184' width='2' height='2' fill='#000080'/>
<rect x='924' y='173' width='2' height='49' fill='#000080'/>
<rect x='926' y='173' width='2' height='2' fill='#000080'/>
<rect x='930' y='146' width='2' height='49' fill='#ff0000'/>
<rect x='932' y='188' width='2' height='2' fill='#ff0000'/>
<rect x='935' y='183' width='2' height='35' fill='#ff0000'/>
<rect x='937' y='212' width='2' height='2' fill='#ff0000'/>
<rect x='946' y='192' width='2' height='15' fill='#000080'/>
<rect x='948' y='205' width='2' height='2' fill='#000080'/>
<rect x='952' y='192' width='2' height='8' fill='#000080'/>
<rect x='954' y='196' width='2' height='2' fill='#000080'/>
<rect x='957' y='193' width='2' height='12' fill='#ff0000'/>
<rect x='959' y='197' width='2' height='2' fill='#ff0000'/>
<rect x='963' y='196' width='2' height='8' fill='#000080'/>
<rect x='965' y='196' width='2' height='2' fill='#000080'/>
<rect x='968' y='193' width='2' height='19' fill='#ff0000'/>
<rect x='970' y='201' width='2' height='2' fill='#ff0000'/>
<rect x='979' y='190' width='2' height='11' fill='#000080'/>
<rect x='981' y='199' width='2' height='2' fill='#000080'/>
<rect x='984' y='183' width='2' height='18' fill='#000080'/>
<rect x='986' y='190' width='2' height='2' fill='#000080'/>
<rect x='990' y='175' width='2' height='26' fill='#ff0000'/>
<rect x='992' y='190' width='2' height='2' fill='#ff0000'/>
<rect x='995' y='187' width='2' height='11' fill='#000080'/>
<rect x='997' y='187' width='2' height='2' fill='#000080'/>
<rect x='1001' y='182' width='2' height='9' fill='#000080'/>
<rect x='1003' y='184' width='2' height='2' fill='#000080'/>
<rect x='1017' y='185' width='2' height='18' fill='#ff0000'/>
<rect x='1019' y='195' width='2' height='2' fill='#ff0000'/>
<rect x='1023' y='195' width='2' height='19' fill='#ff0000'/>
<rect x='1025' y='202' width='2' height='2' fill='#ff0000'/>
<rect x='1028' y='184' width='2' height='20' fill='#000080'/>
<rect x='1030' y='199' width='2' height='2' fill='#000080'/>
<rect x='1034' y='198' width='2' height='27' fill='#ff0000'/>
<rect x='1036' y='205' width='2' height='2' fill='#ff0000'/>
<rect x='1039' y='206' width='2' height='21' fill='#ff0000'/>
<rect x='1041' y='212' width='2' height='2' fill='#ff0000'/>
<rect x='1050' y='196' width='2' height='25' fill='#000080'/>
<rect x='1052' y='207' width='2' height='2' fill='#000080'/>
<rect x='1056' y='199' width='2' height='17' fill='#000080'/>
<rect x='1058' y='200' width='2' height='2' fill='#000080'/>
<rect x='1061' y='170' width='2' height='31' fill='#000080'/>
<rect x='1063' y='170' width='2' height='2' fill='#000080'/>
<rect x='1067' y='161' width='2' height='11' fill='#000080'/>
<rect x='1069' y='162' width='2' height='2' fill='#000080'/>
<rect x='1072' y='156' width='2' height='7' fill='#000080'/>
<rect x='1074' y='156' width='2' height='2' fill='#000080'/>
<rect x='1083' y='151' width='2' height='27' fill='#ff0000'/>
<rect x='1085' y='172' width='2' height='2' fill='#ff0000'/>
<rect x='1089' y='151' width='2' height='25' fill='#000080'/>
<rect x='1091' y='151' width='2' height='2' fill='#000080'/>
<rect x='1094' y='153' width='2' height='7' fill='#ff0000'/>
<rect x='1096' y='157' width='2' height='2' fill='#ff0000'/>
<rect x='1100' y='143' width='2' height='22' fill='#000080'/>
<rect x='1102' y='145' width='2' height='2' fill='#000080'/>
<rect x='1105' y='136' width='2' height='12' fill='#000080'/>
<rect x='1107' y='141' width='2' height='2' fill='#000080'/>
<rect x='1116' y='140' width='2' height='10' fill='#000080'/>
<rect x='1118' y='140' width='2' height='2' fill='#000080'/>
<rect x='1121' y='134' width='2' height='13' fill='#000080'/>
<rect x='1123' y='134' width='2' height='2' fill='#000080'/>
<rect x='1127' y='131' width='2' height='9' fill='#ff0000'/>
<rect x='1129' y='134' width='2' height='2' fill='#ff0000'/>
<rect x='1132' y='128' width='2' height='13' fill='#000080'/>
<rect x='1134' y='129' width='2' height='2' fill='#000080'/>
<rect x='1138' y='127' width='2' height='6' fill='#000080'/>
<rect x='1140' y='127' width='2' height='2' fill='#000080'/>
<rect x='1160' y='118' width='2' height='13' fill='#000080'/>
<rect x='1162' y='118' width='2' height='2' fill='#000080'/>
<rect x='1165' y='114' width='2' height='14' fill='#000080'/>
<rect x='1167' y='114' width='2' height='2' fill='#000080'/>
<rect x='1171' y='108' width='2' height='16' fill='#000080'/>
<rect x='1173' y='108' width='2' height='2' fill='#000080'/>
<rect x='1187' y='95' width='2' height='15' fill='#000080'/>
<rect x='1189' y='99' width='2' height='2' fill='#000080'/>
<rect x='1193' y='97' width='2' height='6' fill='#000080'/>
<rect x='1195' y='97' width='2' height='2' fill='#000080'/>
<rect x='1198' y='93' width='2' height='10' fill='#000080'/>
<rect x='1200' y='93' width='2' height='2' fill='#000080'/>
<rect x='1204' y='93' width='2' height='7' fill='#000080'/>
<rect x='1206' y='93' width='2' height='2' fill='#000080'/>
<rect x='1215' y='85' width='2' height='8' fill='#000080'/>
<rect x='1217' y='85' width='2' height='2' fill='#000080'/>
<rect x='1220' y='75' width='2' height='11' fill='#000080'/>
<rect x='1222' y='75' width='2' height='2' fill='#000080'/>
<rect x='1226' y='63' width='2' height='18' fill='#000080'/>
<rect x='1228' y='70' width='2' height='2' fill='#000080'/>
<rect x='1231' y='70' width='2' height='10' fill='#000080'/>
<rect x='1233' y='70' width='2' height='2' fill='#000080'/>
<rect x='1237' y='60' width='2' height='12' fill='#000080'/>
<rect x='1239' y='60' width='2' height='2' fill='#000080'/>
<rect x='1248' y='56' width='2' height='8' fill='#ff0000'/>
<rect x='1250' y='60' width='2' height='2' fill='#ff0000'/>
<rect x='53' y='371' width='2' height='5' fill='#ff8080'/>
<rect x='55' y='373' width='2' height='2' fill='#ff8080'/>
<rect x='58' y='367' width='2' height='14' fill='#007a00'/>
<rect x='60' y='372' width='2' height='2' fill='#007a00'/>
<rect x='63' y='371' width='2' height='9' fill='#ff8080'/>
<rect x='65' y='378' width='2' height='2' fill='#ff8080'/>
<rect x='69' y='368' width='2' height='13' fill='#007a00'/>
<rect x='71' y='368' width='2' height='2' fill='#007a00'/>
<rect x='74' y='368' width='2' height='18' fill='#ff8080'/>
<rect x='76' y='377' width='2' height='2' fill='#ff8080'/>
<rect x='80' y='378' width='2' height='2' fill='#ff8080'/>
<rect x='82' y='378' width='2' height='2' fill='#ff8080'/>
<rect x='85' y='375' width='2' height='5' fill='#007a00'/>
<rect x='87' y='375' width='2' height='2' fill='#007a00'/>
<rect x='91' y='373' width='2' height='18' fill='#ff8080'/>
<rect x='93' y='387' width='2' height='2' fill='#ff8080'/>
<rect x='96' y='382' width='2' height='15' fill='#ff8080'/>
<rect x='98' y='388' width='2' height='2' fill='#ff8080'/>
<rect x='102' y='388' width='2' height='35' fill='#ff8080'/>
<rect x='104' y='420' width='2' height='2' fill='#ff8080'/>
<rect x='107' y='417' width='2' height='13' fill='#ff8080'/>
<rect x='109' y='424' width='2' height='2' fill='#ff8080'/>
<rect x='113' y='409' width='2' height='2' fill='#007a00'/>
<rect x='115' y='409' width='2' height='2' fill='#007a00'/>
<rect x='118' y='407' width='2' height='7' fill='#007a00'/>
<rect x='120' y='407' width='2' height='2' fill='#007a00'/>
<rect x='124' y='406' width='2' height='11' fill='#007a00'/>
<rect x='126' y='406' width='2' height='2' fill='#007a00'/>
<rect x='129' y='407' width='2' height='32' fill='#ff8080'/>
<rect x='131' y='437' width='2' height='2' fill='#ff8080'/>
<rect x='135' y='432' width='2' height='19' fill='#ff8080'/>
<rect x='137' y='443' width='2' height='2' fill='#ff8080'/>
<rect x='140' y='433' width='2' height='13' fill='#007a00'/>
<rect x='142' y='433' width='2' height='2' fill='#007a00'/>
<rect x='146' y='440' width='2' height='3' fill='#ff8080'/>
<rect x='148' y='441' width='2' height='2' fill='#ff8080'/>
<rect x='151' y='440' width='2' height='2' fill='#ff8080'/>
<rect x='153' y='440' width='2' height='2' fill='#ff8080'/>
<rect x='157' y='434' width='2' height='10' fill='#007a00'/>
<rect x='159' y='437' width='2' height='2' fill='#007a00'/>
<rect x='162' y='420' width='2' height='28' fill='#007a00'/>
<rect x='164' y='420' width='2' height='2' fill='#007a00'/>
<rect x='168' y='402' width='2' height='24' fill='#007a00'/>
<rect x='170' y='404' width='2' height='2' fill='#007a00'/>
<rect x='173' y='402' width='2' height='12' fill='#ff8080'/>
<rect x='175' y='408' width='2' height='2' fill='#ff8080'/>
<rect x='184' y='371' width='2' height='22' fill='#007a00'/>
<rect x='186' y='372' width='2' height='2' fill='#007a00'/>
<rect x='190' y='372' width='2' height='12' fill='#ff8080'/>
<rect x='192' y='382' width='2' height='2' fill='#ff8080'/>
<rect x='195' y='381' width='2' height='26' fill='#ff8080'/>
<rect x='197' y='392' width='2' height='2' fill='#ff8080'/>
<rect x='201' y='381' width='2' height='17' fill='#007a00'/>
<rect x='203' y='381' width='2' height='2' fill='#007a00'/>
<rect x='206' y='377' width='2' height='17' fill='#ff8080'/>
<rect x='208' y='390' width='2' height='2' fill='#ff8080'/>
<rect x='211' y='374' width='2' height='2' fill='#007a00'/>
<rect x='213' y='374' width='2' height='2' fill='#007a00'/>
<rect x='217' y='364' width='2' height='14' fill='#007a00'/>
<rect x='219' y='366' width='2' height='2' fill='#007a00'/>
<rect x='222' y='352' width='2' height='26' fill='#007a00'/>
<rect x='224' y='361' width='2' height='2' fill='#007a00'/>
<rect x='228' y='355' width='2' height='15' fill='#ff8080'/>
<rect x='230' y='362' width='2' height='2' fill='#ff8080'/>
<rect x='233' y='356' width='2' height='18' fill='#ff8080'/>
<rect x='235' y='364' width='2' height='2' fill='#ff8080'/>
<rect x='239' y='350' width='2' height='30' fill='#ff8080'/>
<rect x='241' y='375' width='2' height='2' fill='#ff8080'/>
<rect x='244' y='383' width='2' height='2' fill='#ff8080'/>
<rect x='246' y='383' width='2' height='2' fill='#ff8080'/>
<rect x='250' y='381' width='2' height='22' fill='#ff8080'/>
<rect x='252' y='399' width='2' height='2' fill='#ff8080'/>
<rect x='255' y='393' width='2' height='29' fill='#ff8080'/>
<rect x='257' y='414' width='2' height='2' fill='#ff8080'/>
<rect x='261' y='408' width='2' height='22' fill='#ff8080'/>
<rect x='263' y='424' width='2' height='2' fill='#ff8080'/>
<rect x='266' y='414' width='2' height='19' fill='#ff8080'/>
<rect x='268' y='427' width='2' height='2' fill='#ff8080'/>
<rect x='272' y='368' width='2' height='75' fill='#007a00'/>
<rect x='274' y='398' width='2' height='2' fill='#007a00'/>
<rect x='277' y='317' width='2' height='5' fill='#007a00'/>
<rect x='279' y='319' width='2' height='2' fill='#007a00'/>
<rect x='283' y='293' width='2' height='27' fill='#007a00'/>
<rect x='285' y='299' width='2' height='2' fill='#007a00'/>
<rect x='288' y='261' width='2' height='43' fill='#007a00'/>
<rect x='290' y='273' width='2' height='2' fill='#007a00'/>
<rect x='294' y='271' width='2' height='19' fill='#ff8080'/>
<rect x='296' y='280' width='2' height='2' fill='#ff8080'/>
<rect x='299' y='275' width='2' height='28' fill='#ff8080'/>
<rect x='301' y='287' width='2' height='2' fill='#ff8080'/>
<rect x='305' y='261' width='2' height='34' fill='#007a00'/>
<rect x='307' y='273' width='2' height='2' fill='#007a00'/>
<rect x='310' y='256' width='2' height='5' fill='#007a00'/>
<rect x='312' y='258' width='2' height='2' fill='#007a00'/>
<rect x='316' y='256' width='2' height='8' fill='#ff8080'/>
<rect x='318' y='262' width='2' height='2' fill='#ff8080'/>
<rect x='321' y='257' width='2' height='11' fill='#007a00'/>
<rect x='323' y='258' width='2' height='2' fill='#007a00'/>
<rect x='327' y='223' width='2' height='38' fill='#007a00'/>
<rect x='329' y='225' width='2' height='2' fill='#007a00'/>
<rect x='332' y='205' width='2' height='29' fill='#007a00'/>
<rect x='334' y='213' width='2' height='2' fill='#007a00'/>
<rect x='338' y='209' width='2' height='29' fill='#ff8080'/>
<rect x='340' y='217' width='2' height='2' fill='#ff8080'/>
<rect x='343' y='226' width='2' height='2' fill='#ff8080'/>
<rect x='345' y='226' width='2' height='2' fill='#ff8080'/>
<rect x='349' y='225' width='2' height='5' fill='#007a00'/>
<rect x='351' y='225' width='2' height='2' fill='#007a00'/>
<rect x='354' y='216' width='2' height='23' fill='#ff8080'/>
<rect x='356' y='230' width='2' height='2' fill='#ff8080'/>
<rect x='359' y='228' width='2' height='46' fill='#ff8080'/>
<rect x='361' y='271' width='2' height='2' fill='#ff8080'/>
<rect x='365' y='241' width='2' height='40' fill='#007a00'/>
<rect x='367' y='242' width='2' height='2' fill='#007a00'/>
<rect x='370' y='242' width='2' height='50' fill='#ff8080'/>
<rect x='372' y='275' width='2' height='2' fill='#ff8080'/>
<rect x='376' y='265' width='2' height='2' fill='#007a00'/>
<rect x='378' y='265' width='2' height='2' fill='#007a00'/>
<rect x='381' y='262' width='2' height='12' fill='#ff8080'/>
<rect x='383' y='267' width='2' height='2' fill='#ff8080'/>
<rect x='387' y='264' width='2' height='12' fill='#ff8080'/>
<rect x='389' y='268' width='2' height='2' fill='#ff8080'/>
<rect x='392' y='251' width='2' height='20' fill='#007a00'/>
<rect x='394' y='256' width='2' height='2' fill='#007a00'/>
<rect x='398' y='251' width='2' height='30' fill='#ff8080'/>
<rect x='400' y='274' width='2' height='2' fill='#ff8080'/>
<rect x='403' y='261' width='2' height='17' fill='#007a00'/>
<rect x='405' y='271' width='2' height='2' fill='#007a00'/>
<rect x='409' y='262' width='2' height='2' fill='#007a00'/>
<rect x='411' y='262' width='2' height='2' fill='#007a00'/>
<rect x='414' y='264' width='2' height='7' fill='#ff8080'/>
<rect x='416' y='265' width='2' height='2' fill='#ff8080'/>
<rect x='420' y='258' width='2' height='15' fill='#007a00'/>
<rect x='422' y='260' width='2' height='2' fill='#007a00'/>
<rect x='425' y='251' width='2' height='18' fill='#ff8080'/>
<rect x='427' y='266' width='2' height='2' fill='#ff8080'/>
<rect x='431' y='254' width='2' height='15' fill='#007a00'/>
<rect x='433' y='263' width='2' height='2' fill='#007a00'/>
<rect x='436' y='245' width='2' height='23' fill='#007a00'/>
<rect x='438' y='252' width='2' height='2' fill='#007a00'/>
<rect x='442' y='246' width='2' height='2' fill='#007a00'/>
<rect x='444' y='246' width='2' height='2' fill='#007a00'/>
<rect x='447' y='243' width='2' height='9' fill='#007a00'/>
<rect x='449' y='244' width='2' height='2' fill='#007a00'/>
<rect x='453' y='237' width='2' height='17' fill='#007a00'/>
<rect x='455' y='239' width='2' height='2' fill='#007a00'/>
<rect x='458' y='236' width='2' height='22' fill='#ff8080'/>
<rect x='460' y='253' width='2' height='2' fill='#ff8080'/>
<rect x='464' y='249' width='2' height='17' fill='#ff8080'/>
<rect x='466' y='263' width='2' height='2' fill='#ff8080'/>
<rect x='469' y='235' width='2' height='36' fill='#007a00'/>
<rect x='471' y='238' width='2' height='2' fill='#007a00'/>
<rect x='475' y='238' width='2' height='2' fill='#ff8080'/>
<rect x='477' y='238' width='2' height='2' fill='#ff8080'/>
<rect x='480' y='238' width='2' height='4' fill='#007a00'/>
<rect x='482' y='238' width='2' height='2' fill='#007a00'/>
<rect x='486' y='232' width='2' height='10' fill='#007a00'/>
<rect x='488' y='232' width='2' height='2' fill='#007a00'/>
<rect x='491' y='219' width='2' height='14' fill='#007a00'/>
<rect x='493' y='223' width='2' height='2' fill='#007a00'/>
<rect x='497' y='211' width='2' height='20' fill='#007a00'/>
<rect x='499' y='212' width='2' height='2' fill='#007a00'/>
<rect x='502' y='205' width='2' height='13' fill='#007a00'/>
<rect x='504' y='211' width='2' height='2' fill='#007a00'/>
<rect x='508' y='201' width='2' height='2' fill='#007a00'/>
<rect x='510' y='201' width='2' height='2' fill='#007a00'/>
<rect x='513' y='199' width='2' height='5' fill='#007a00'/>
<rect x='515' y='199' width='2' height='2' fill='#007a00'/>
<rect x='518' y='187' width='2' height='21' fill='#007a00'/>
<rect x='520' y='192' width='2' height='2' fill='#007a00'/>
<rect x='524' y='182' width='2' height='24' fill='#ff8080'/>
<rect x='526' y='198' width='2' height='2' fill='#ff8080'/>
<rect x='529' y='194' width='2' height='12' fill='#007a00'/>
<rect x='531' y='196' width='2' height='2' fill='#007a00'/>
<rect x='535' y='194' width='2' height='21' fill='#ff8080'/>
<rect x='537' y='206' width='2' height='2' fill='#ff8080'/>
<rect x='540' y='196' width='2' height='2' fill='#007a00'/>
<rect x='542' y='196' width='2' height='2' fill='#007a00'/>
<rect x='546' y='193' width='2' height='7' fill='#ff8080'/>
<rect x='548' y='198' width='2' height='2' fill='#ff8080'/>
<rect x='551' y='198' width='2' height='11' fill='#ff8080'/>
<rect x='553' y='206' width='2' height='2' fill='#ff8080'/>
<rect x='557' y='204' width='2' height='17' fill='#ff8080'/>
<rect x='559' y='219' width='2' height='2' fill='#ff8080'/>
<rect x='562' y='216' width='2' height='23' fill='#ff8080'/>
<rect x='564' y='232' width='2' height='2' fill='#ff8080'/>
<rect x='568' y='219' width='2' height='17' fill='#007a00'/>
<rect x='570' y='220' width='2' height='2' fill='#007a00'/>
<rect x='573' y='228' width='2' height='2' fill='#ff8080'/>
<rect x='575' y='228' width='2' height='2' fill='#ff8080'/>
<rect x='579' y='226' width='2' height='6' fill='#007a00'/>
<rect x='581' y='226' width='2' height='2' fill='#007a00'/>
<rect x='584' y='222' width='2' height='7' fill='#007a00'/>
<rect x='586' y='224' width='2' height='2' fill='#007a00'/>
<rect x='590' y='222' width='2' height='14' fill='#ff8080'/>
<rect x='592' y='229' width='2' height='2' fill='#ff8080'/>
<rect x='595' y='228' width='2' height='14' fill='#ff8080'/>
<rect x='597' y='235' width='2' height='2' fill='#ff8080'/>
<rect x='601' y='234' width='2' height='27' fill='#ff8080'/>
<rect x='603' y='248' width='2' height='2' fill='#ff8080'/>
<rect x='606' y='260' width='2' height='2' fill='#ff8080'/>
<rect x='608' y='260' width='2' height='2' fill='#ff8080'/>
<rect x='612' y='258' width='2' height='6' fill='#007a00'/>
<rect x='614' y='258' width='2' height='2' fill='#007a00'/>
<rect x='617' y='255' width='2' height='14' fill='#ff8080'/>
<rect x='619' y='262' width='2' height='2' fill='#ff8080'/>
<rect x='623' y='260' width='2' height='14' fill='#007a00'/>
<rect x='625' y='260' width='2' height='2' fill='#007a00'/>
<rect x='628' y='249' width='2' height='15' fill='#007a00'/>
<rect x='630' y='251' width='2' height='2' fill='#007a00'/>
<rect x='634' y='235' width='2' height='18' fill='#007a00'/>
<rect x='636' y='241' width='2' height='2' fill='#007a00'/>
<rect x='639' y='244' width='2' height='2' fill='#ff8080'/>
<rect x='641' y='244' width='2' height='2' fill='#ff8080'/>
<rect x='645' y='240' width='2' height='4' fill='#007a00'/>
<rect x='647' y='240' width='2' height='2' fill='#007a00'/>
<rect x='650' y='238' width='2' height='16' fill='#ff8080'/>
<rect x='652' y='250' width='2' height='2' fill='#ff8080'/>
<rect x='656' y='226' width='2' height='28' fill='#007a00'/>
<rect x='658' y='231' width='2' height='2' fill='#007a00'/>
<rect x='661' y='223' width='2' height='19' fill='#ff8080'/>
<rect x='663' y='238' width='2' height='2' fill='#ff8080'/>
<rect x='666' y='225' width='2' height='17' fill='#007a00'/>
<rect x='668' y='236' width='2' height='2' fill='#007a00'/>
<rect x='672' y='215' width='2' height='3' fill='#007a00'/>
<rect x='674' y='215' width='2' height='2' fill='#007a00'/>
<rect x='677' y='215' width='2' height='4' fill='#ff8080'/>
<rect x='679' y='216' width='2' height='2' fill='#ff8080'/>
<rect x='683' y='215' width='2' height='12' fill='#ff8080'/>
<rect x='685' y='216' width='2' height='2' fill='#ff8080'/>
<rect x='688' y='204' width='2' height='17' fill='#007a00'/>
<rect x='690' y='213' width='2' height='2' fill='#007a00'/>
<rect x='694' y='209' width='2' height='11' fill='#ff8080'/>
<rect x='696' y='214' width='2' height='2' fill='#ff8080'/>
<rect x='699' y='208' width='2' height='13' fill='#ff8080'/>
<rect x='701' y='218' width='2' height='2' fill='#ff8080'/>
<rect x='705' y='196' width='2' height='2' fill='#007a00'/>
<rect x='707' y='196' width='2' height='2' fill='#007a00'/>
<rect x='710' y='196' width='2' height='4' fill='#ff8080'/>
<rect x='712' y='197' width='2' height='2' fill='#ff8080'/>
<rect x='716' y='184' width='2' height='17' fill='#007a00'/>
<rect x='718' y='193' width='2' height='2' fill='#007a00'/>
<rect x='721' y='190' width='2' height='19' fill='#ff8080'/>
<rect x='723' y='205' width='2' height='2' fill='#ff8080'/>
<rect x='727' y='202' width='2' height='12' fill='#ff8080'/>
<rect x='729' y='207' width='2' height='2' fill='#ff8080'/>
<rect x='732' y='196' width='2' height='15' fill='#007a00'/>
<rect x='734' y='198' width='2' height='2' fill='#007a00'/>
<rect x='738' y='196' width='2' height='2' fill='#007a00'/>
<rect x='740' y='196' width='2' height='2' fill='#007a00'/>
<rect x='743' y='187' width='2' height='11' fill='#007a00'/>
<rect x='745' y='190' width='2' height='2' fill='#007a00'/>
<rect x='749' y='178' width='2' height='16' fill='#007a00'/>
<rect x='751' y='184' width='2' height='2' fill='#007a00'/>
<rect x='754' y='162' width='2' height='25' fill='#007a00'/>
<rect x='756' y='163' width='2' height='2' fill='#007a00'/>
<rect x='760' y='155' width='2' height='16' fill='#ff8080'/>
<rect x='762' y='166' width='2' height='2' fill='#ff8080'/>
<rect x='765' y='56' width='2' height='114' fill='#007a00'/>
<rect x='767' y='120' width='2' height='2' fill='#007a00'/>
<rect x='771' y='117' width='2' height='2' fill='#007a00'/>
<rect x='773' y='117' width='2' height='2' fill='#007a00'/>
<rect x='776' y='114' width='2' height='7' fill='#ff8080'/>
<rect x='778' y='117' width='2' height='2' fill='#ff8080'/>
<rect x='782' y='110' width='2' height='15' fill='#007a00'/>
<rect x='784' y='113' width='2' height='2' fill='#007a00'/>
<rect x='787' y='86' width='2' height='34' fill='#ff8080'/>
<rect x='789' y='116' width='2' height='2' fill='#ff8080'/>
<rect x='793' y='106' width='2' height='22' fill='#007a00'/>
<rect x='795' y='110' width='2' height='2' fill='#007a00'/>
<rect x='798' y='103' width='2' height='17' fill='#007a00'/>
<rect x='800' y='110' width='2' height='2' fill='#007a00'/>
<rect x='804' y='118' width='2' height='2' fill='#ff8080'/>
<rect x='806' y='118' width='2' height='2' fill='#ff8080'/>
<rect x='809' y='111' width='2' height='9' fill='#007a00'/>
<rect x='811' y='117' width='2' height='2' fill='#007a00'/>
<rect x='814' y='105' width='2' height='16' fill='#007a00'/>
<rect x='816' y='116' width='2' height='2' fill='#007a00'/>
<rect x='820' y='115' width='2' height='25' fill='#ff8080'/>
<rect x='822' y='136' width='2' height='2' fill='#ff8080'/>
<rect x='825' y='129' width='2' height='14' fill='#007a00'/>
<rect x='827' y='135' width='2' height='2' fill='#007a00'/>
<rect x='831' y='113' width='2' height='28' fill='#ff8080'/>
<rect x='833' y='137' width='2' height='2' fill='#ff8080'/>
<rect x='842' y='140' width='2' height='5' fill='#007a00'/>
<rect x='844' y='140' width='2' height='2' fill='#007a00'/>
<rect x='847' y='136' width='2' height='11' fill='#ff8080'/>
<rect x='849' y='143' width='2' height='2' fill='#ff8080'/>
<rect x='853' y='123' width='2' height='23' fill='#007a00'/>
<rect x='855' y='132' width='2' height='2' fill='#007a00'/>
<rect x='858' y='127' width='2' height='16' fill='#ff8080'/>
<rect x='860' y='138' width='2' height='2' fill='#ff8080'/>
<rect x='864' y='124' width='2' height='21' fill='#007a00'/>
<rect x='866' y='129' width='2' height='2' fill='#007a00'/>
<rect x='869' y='116' width='2' height='2' fill='#007a00'/>
<rect x='871' y='116' width='2' height='2' fill='#007a00'/>
<rect x='875' y='108' width='2' height='14' fill='#ff8080'/>
<rect x='877' y='119' width='2' height='2' fill='#ff8080'/>
<rect x='880' y='115' width='2' height='16' fill='#ff8080'/>
<rect x='882' y='126' width='2' height='2' fill='#ff8080'/>
<rect x='886' y='108' width='2' height='24' fill='#007a00'/>
<rect x='888' y='110' width='2' height='2' fill='#007a00'/>
<rect x='891' y='107' width='2' height='18' fill='#ff8080'/>
<rect x='893' y='114' width='2' height='2' fill='#ff8080'/>
<rect x='897' y='114' width='2' height='38' fill='#ff8080'/>
<rect x='899' y='139' width='2' height='2' fill='#ff8080'/>
<rect x='902' y='140' width='2' height='2' fill='#007a00'/>
<rect x='904' y='140' width='2' height='2' fill='#007a00'/>
<rect x='908' y='141' width='2' height='10' fill='#ff8080'/>
<rect x='910' y='145' width='2' height='2' fill='#ff8080'/>
<rect x='913' y='133' width='2' height='14' fill='#007a00'/>
<rect x='915' y='139' width='2' height='2' fill='#007a00'/>
<rect x='919' y='134' width='2' height='12' fill='#ff8080'/>
<rect x='921' y='141' width='2' height='2' fill='#ff8080'/>
<rect x='924' y='160' width='2' height='12' fill='#ff8080'/>
<rect x='926' y='166' width='2' height='2' fill='#ff8080'/>
<rect x='930' y='159' width='2' height='38' fill='#ff8080'/>
<rect x='932' y='193' width='2' height='2' fill='#ff8080'/>
<rect x='935' y='205' width='2' height='11' fill='#ff8080'/>
<rect x='937' y='207' width='2' height='2' fill='#ff8080'/>
<rect x='941' y='206' width='2' height='7' fill='#ff8080'/>
<rect x='943' y='209' width='2' height='2' fill='#ff8080'/>
<rect x='946' y='203' width='2' height='13' fill='#ff8080'/>
<rect x='948' y='214' width='2' height='2' fill='#ff8080'/>
<rect x='952' y='186' width='2' height='34' fill='#007a00'/>
<rect x='954' y='206' width='2' height='2' fill='#007a00'/>
<rect x='957' y='205' width='2' height='13' fill='#ff8080'/>
<rect x='959' y='206' width='2' height='2' fill='#ff8080'/>
<rect x='963' y='205' width='2' height='18' fill='#ff8080'/>
<rect x='965' y='220' width='2' height='2' fill='#ff8080'/>
<rect x='968' y='216' width='2' height='2' fill='#007a00'/>
<rect x='970' y='216' width='2' height='2' fill='#007a00'/>
<rect x='973' y='213' width='2' height='6' fill='#007a00'/>
<rect x='975' y='213' width='2' height='2' fill='#007a00'/>
<rect x='979' y='202' width='2' height='36' fill='#ff8080'/>
<rect x='981' y='229' width='2' height='2' fill='#ff8080'/>
<rect x='984' y='217' width='2' height='20' fill='#007a00'/>
<rect x='986' y='220' width='2' height='2' fill='#007a00'/>
<rect x='990' y='212' width='2' height='30' fill='#ff8080'/>
<rect x='992' y='237' width='2' height='2' fill='#ff8080'/>
<rect x='995' y='233' width='2' height='11' fill='#ff8080'/>
<rect x='997' y='238' width='2' height='2' fill='#ff8080'/>
<rect x='1001' y='223' width='2' height='19' fill='#007a00'/>
<rect x='1003' y='236' width='2' height='2' fill='#007a00'/>
<rect x='1006' y='236' width='2' height='2' fill='#007a00'/>
<rect x='1008' y='236' width='2' height='2' fill='#007a00'/>
<rect x='1012' y='230' width='2' height='6' fill='#007a00'/>
<rect x='1014' y='232' width='2' height='2' fill='#007a00'/>
<rect x='1017' y='219' width='2' height='16' fill='#007a00'/>
<rect x='1019' y='220' width='2' height='2' fill='#007a00'/>
<rect x='1023' y='216' width='2' height='27' fill='#ff8080'/>
<rect x='1025' y='228' width='2' height='2' fill='#ff8080'/>
<rect x='1028' y='216' width='2' height='30' fill='#ff8080'/>
<rect x='1030' y='242' width='2' height='2' fill='#ff8080'/>
<rect x='1034' y='237' width='2' height='29' fill='#007a00'/>
<rect x='1036' y='239' width='2' height='2' fill='#007a00'/>
<rect x='1039' y='261' width='2' height='3' fill='#ff8080'/>
<rect x='1041' y='262' width='2' height='2' fill='#ff8080'/>
<rect x='1045' y='260' width='2' height='18' fill='#ff8080'/>
<rect x='1047' y='270' width='2' height='2' fill='#ff8080'/>
<rect x='1050' y='239' width='2' height='41' fill='#007a00'/>
<rect x='1052' y='245' width='2' height='2' fill='#007a00'/>
<rect x='1056' y='242' width='2' height='15' fill='#007a00'/>
<rect x='1058' y='243' width='2' height='2' fill='#007a00'/>
<rect x='1061' y='222' width='2' height='22' fill='#007a00'/>
<rect x='1063' y='229' width='2' height='2' fill='#007a00'/>
<rect x='1067' y='217' width='2' height='36' fill='#ff8080'/>
<rect x='1069' y='247' width='2' height='2' fill='#ff8080'/>
<rect x='1072' y='244' width='2' height='21' fill='#ff8080'/>
<rect x='1074' y='257' width='2' height='2' fill='#ff8080'/>
<rect x='1078' y='258' width='2' height='7' fill='#ff8080'/>
<rect x='1080' y='262' width='2' height='2' fill='#ff8080'/>
<rect x='1083' y='250' width='2' height='17' fill='#007a00'/>
<rect x='1085' y='257' width='2' height='2' fill='#007a00'/>
<rect x='1089' y='255' width='2' height='17' fill='#ff8080'/>
<rect x='1091' y='257' width='2' height='2' fill='#ff8080'/>
<rect x='1094' y='252' width='2' height='16' fill='#ff8080'/>
<rect x='1096' y='260' width='2' height='2' fill='#ff8080'/>
<rect x='1100' y='257' width='2' height='16' fill='#ff8080'/>
<rect x='1102' y='259' width='2' height='2' fill='#ff8080'/>
<rect x='1105' y='264' width='2' height='2' fill='#ff8080'/>
<rect x='1107' y='264' width='2' height='2' fill='#ff8080'/>
<rect x='1111' y='263' width='2' height='5' fill='#ff8080'/>
<rect x='1113' y='263' width='2' height='2' fill='#ff8080'/>
<rect x='1116' y='246' width='2' height='22' fill='#007a00'/>
<rect x='1118' y='257' width='2' height='2' fill='#007a00'/>
<rect x='1121' y='251' width='2' height='13' fill='#007a00'/>
<rect x='1123' y='255' width='2' height='2' fill='#007a00'/>
<rect x='1127' y='244' width='2' height='14' fill='#007a00'/>
<rect x='1129' y='246' width='2' height='2' fill='#007a00'/>
<rect x='1132' y='232' width='2' height='18' fill='#007a00'/>
<rect x='1134' y='233' width='2' height='2' fill='#007a00'/>
<rect x='1138' y='234' width='2' height='2' fill='#007a00'/>
<rect x='1140' y='234' width='2' height='2' fill='#007a00'/>
<rect x='1143' y='229' width='2' height='6' fill='#007a00'/>
<rect x='1145' y='230' width='2' height='2' fill='#007a00'/>
<rect x='1149' y='228' width='2' height='8' fill='#007a00'/>
<rect x='1151' y='230' width='2' height='2' fill='#007a00'/>
<rect x='1154' y='225' width='2' height='9' fill='#007a00'/>
<rect x='1156' y='228' width='2' height='2' fill='#007a00'/>
<rect x='1160' y='225' width='2' height='12' fill='#ff8080'/>
<rect x='1162' y='228' width='2' height='2' fill='#ff8080'/>
<rect x='1165' y='195' width='2' height='36' fill='#007a00'/>
<rect x='1167' y='210' width='2' height='2' fill='#007a00'/>
<rect x='1171' y='228' width='2' height='2' fill='#ff8080'/>
<rect x='1173' y='228' width='2' height='2' fill='#ff8080'/>
<rect x='1176' y='226' width='2' height='4' fill='#007a00'/>
<rect x='1178' y='226' width='2' height='2' fill='#007a00'/>
<rect x='1182' y='226' width='2' height='10' fill='#ff8080'/>
<rect x='1184' y='230' width='2' height='2' fill='#ff8080'/>
<rect x='1187' y='227' width='2' height='19' fill='#ff8080'/>
<rect x='1189' y='231' width='2' height='2' fill='#ff8080'/>
<rect x='1193' y='225' width='2' height='14' fill='#007a00'/>
<rect x='1195' y='229' width='2' height='2' fill='#007a00'/>
<rect x='1198' y='215' width='2' height='17' fill='#007a00'/>
<rect x='1200' y='225' width='2' height='2' fill='#007a00'/>
<rect x='1204' y='217' width='2' height='2' fill='#007a00'/>
<rect x='1206' y='217' width='2' height='2' fill='#007a00'/>
<rect x='1209' y='211' width='2' height='7' fill='#007a00'/>
<rect x='1211' y='212' width='2' height='2' fill='#007a00'/>
<rect x='1215' y='187' width='2' height='29' fill='#007a00'/>
<rect x='1217' y='188' width='2' height='2' fill='#007a00'/>
<rect x='1220' y='173' width='2' height='25' fill='#ff8080'/>
<rect x='1222' y='195' width='2' height='2' fill='#ff8080'/>
<rect x='1226' y='187' width='2' height='14' fill='#007a00'/>
<rect x='1228' y='192' width='2' height='2' fill='#007a00'/>
<rect x='1231' y='177' width='2' height='23' fill='#007a00'/>
<rect x='1233' y='181' width='2' height='2' fill='#007a00'/>
<rect x='1237' y='172' width='2' height='19' fill='#007a00'/>
<rect x='1239' y='179' width='2' height='2' fill='#007a00'/>
<rect x='1242' y='153' width='2' height='27' fill='#007a00'/>
<rect x='1244' y='158' width='2' height='2' fill='#007a00'/>
<rect x='1248' y='166' width='2' height='6' fill='#ff8080'/>
<rect x='1250' y='169' width='2' height='2' fill='#ff8080'/>
<line x1='1155.5' y1='18' x2='1155.5' y2='488' stroke='#3a3a8a' stroke-width='1'/>
<rect x='14' y='163' width='35' height='14' fill='#007a00' />
<text x='31.5' y='174' font-size='11' fill='#fff' text-anchor='middle' font-weight='normal' >0.8780</text>
<rect x='1282' y='54' width='41' height='14' fill='#000080' />
<text x='1302.5' y='65' font-size='11' fill='#fff' text-anchor='middle' font-weight='normal' >7337.53</text>
<rect x='0' y='492' width='1330' height='1' fill='#9a9a9a' />
<rect x='0' y='493' width='1330' height='1' fill='#6e6e6e' />
<rect x='2' y='494' width='1328' height='14' fill='#bfcddb' />
<rect x='4.5' y='495.5' width='11' height='10' fill='#f0f0f0' stroke='#aab0b6' stroke-width='1'/>
<defs><linearGradient id='ig495' x1='0' y1='0' x2='0' y2='1'><stop offset='0' stop-color='#5a8ab8'/><stop offset='1' stop-color='#30a040'/></linearGradient></defs>
<rect x='6.0' y='497.0' width='4' height='7' fill='url(#ig495)' />
<rect x='10.0' y='497.0' width='4' height='7' fill='#e4e4e4' />
<text x='19.5' y='503.2' font-size='10' fill='#d84a1a' text-anchor='start' font-weight='normal' textLength='165' lengthAdjust='spacingAndGlyphs' >RSI (Relative Strength Index) (83.9013)</text>
<rect x='1302' y='496' width='12' height='10' fill='#f0f0f0' />
<rect x='1302' y='496' width='12' height='1' fill='#ffffff' />
<rect x='1302' y='496' width='1' height='10' fill='#ffffff' />
<rect x='1303' y='504' width='10' height='1' fill='#a8a8a8' />
<rect x='1312' y='497' width='1' height='8' fill='#a8a8a8' />
<rect x='1302' y='505' width='12' height='1' fill='#6a6a6a' />
<rect x='1313' y='496' width='1' height='10' fill='#6a6a6a' />
<rect x='1305' y='498' width='6' height='5' fill='#000000' />
<rect x='1306' y='500' width='4' height='2' fill='#ffffff' />
<rect x='1316' y='496' width='12' height='10' fill='#f0f0f0' />
<rect x='1316' y='496' width='12' height='1' fill='#ffffff' />
<rect x='1316' y='496' width='1' height='10' fill='#ffffff' />
<rect x='1317' y='504' width='10' height='1' fill='#a8a8a8' />
<rect x='1326' y='497' width='1' height='8' fill='#a8a8a8' />
<rect x='1316' y='505' width='12' height='1' fill='#6a6a6a' />
<rect x='1327' y='496' width='1' height='10' fill='#6a6a6a' />
<rect x='1319' y='498' width='1' height='1' fill='#000000' />
<rect x='1323' y='498' width='1' height='1' fill='#000000' />
<rect x='1320' y='499' width='1' height='1' fill='#000000' />
<rect x='1322' y='499' width='1' height='1' fill='#000000' />
<rect x='1321' y='500' width='1' height='1' fill='#000000' />
<rect x='1321' y='500' width='1' height='1' fill='#000000' />
<rect x='1322' y='501' width='1' height='1' fill='#000000' />
<rect x='1320' y='501' width='1' height='1' fill='#000000' />
<rect x='1323' y='502' width='1' height='1' fill='#000000' />
<rect x='1319' y='502' width='1' height='1' fill='#000000' />
<line x1='2' y1='509.5' x2='1330' y2='509.5' stroke='#9d4a4a' stroke-width='1'/>
<line x1='2' y1='563.5' x2='1330' y2='563.5' stroke='#9d4a4a' stroke-width='1'/>
<line x1='2.5' y1='509' x2='2.5' y2='564' stroke='#9d4a4a' stroke-width='1'/>
<line x1='1329.5' y1='509' x2='1329.5' y2='564' stroke='#9d4a4a' stroke-width='1'/>
<rect x='51' y='509' width='2' height='55' fill='#9d4a4a' />
<rect x='1279' y='509' width='2' height='55' fill='#9d4a4a' />
<path d='M67.50,529.50 L79.60,529.50 L81.80,532.10 L81.80,543.10 Q81.80,544.90 80.00,544.90 L68.50,544.90 Q66.40,544.90 66.40,542.50 L66.20,531.50 Q66.20,529.50 67.50,529.50 Z' fill='#1976be' shape-rendering='geometricPrecision'/>
<path d='M66.50,542.50 C69.00,537.00 70.00,533.50 71.50,533.50 C73.00,533.50 74.00,541.00 75.50,541.00 C77.00,541.00 79.00,533.00 80.80,529.50 L81.80,532.10 L81.80,543.10 Q81.80,544.90 80.00,544.90 L68.50,544.90 Q66.80,544.90 66.50,542.50 Z' fill='#073b7a' shape-rendering='geometricPrecision'/>
<path d='M66.50,542.50 C69.00,537.00 70.00,533.50 71.50,533.50 C73.00,533.50 74.00,541.00 75.50,541.00 C77.00,541.00 79.00,533.00 80.80,529.50' stroke='#ffffff' stroke-width='1.9' fill='none' shape-rendering='geometricPrecision'/>
<text x='86' y='544.7' font-size='20.5' fill='#0a6ab2' text-anchor='start' font-weight='bold' textLength='26' lengthAdjust='spacingAndGlyphs' >net</text>
<text x='112.5' y='544.7' font-size='20.5' fill='#0a3a72' text-anchor='start' font-weight='normal' textLength='57' lengthAdjust='spacingAndGlyphs' stroke='#ffffff' stroke-width='0.45'>Station</text>
<line x1='53' y1='543.5' x2='1279' y2='543.5' stroke='#c4c4c4' stroke-width='1' stroke-dasharray='3,3' stroke-dashoffset='1'/>
<line x1='54.5' y1='509' x2='54.5' y2='563' stroke='#c4c4c4' stroke-width='1' stroke-dasharray='3,3' stroke-dashoffset='0'/>
<line x1='70.5' y1='509' x2='70.5' y2='563' stroke='#c4c4c4' stroke-width='1' stroke-dasharray='3,3' stroke-dashoffset='0'/>
<line x1='92.5' y1='509' x2='92.5' y2='563' stroke='#c4c4c4' stroke-width='1' stroke-dasharray='3,3' stroke-dashoffset='0'/>
<line x1='114.5' y1='509' x2='114.5' y2='563' stroke='#c4c4c4' stroke-width='1' stroke-dasharray='3,3' stroke-dashoffset='0'/>
<line x1='136.5' y1='509' x2='136.5' y2='563' stroke='#c4c4c4' stroke-width='1' stroke-dasharray='3,3' stroke-dashoffset='0'/>
<line x1='169.5' y1='509' x2='169.5' y2='563' stroke='#c4c4c4' stroke-width='1' stroke-dasharray='3,3' stroke-dashoffset='0'/>
<line x1='196.5' y1='509' x2='196.5' y2='563' stroke='#c4c4c4' stroke-width='1' stroke-dasharray='3,3' stroke-dashoffset='0'/>
<line x1='212.5' y1='509' x2='212.5' y2='563' stroke='#c4c4c4' stroke-width='1' stroke-dasharray='3,3' stroke-dashoffset='0'/>
<line x1='234.5' y1='509' x2='234.5' y2='563' stroke='#c4c4c4' stroke-width='1' stroke-dasharray='3,3' stroke-dashoffset='0'/>
<line x1='256.5' y1='509' x2='256.5' y2='563' stroke='#c4c4c4' stroke-width='1' stroke-dasharray='3,3' stroke-dashoffset='0'/>
<line x1='278.5' y1='509' x2='278.5' y2='563' stroke='#c4c4c4' stroke-width='1' stroke-dasharray='3,3' stroke-dashoffset='0'/>
<line x1='311.5' y1='509' x2='311.5' y2='563' stroke='#c4c4c4' stroke-width='1' stroke-dasharray='3,3' stroke-dashoffset='0'/>
<line x1='333.5' y1='509' x2='333.5' y2='563' stroke='#c4c4c4' stroke-width='1' stroke-dasharray='3,3' stroke-dashoffset='0'/>
<line x1='350.5' y1='509' x2='350.5' y2='563' stroke='#c4c4c4' stroke-width='1' stroke-dasharray='3,3' stroke-dashoffset='0'/>
<line x1='371.5' y1='509' x2='371.5' y2='563' stroke='#c4c4c4' stroke-width='1' stroke-dasharray='3,3' stroke-dashoffset='0'/>
<line x1='393.5' y1='509' x2='393.5' y2='563' stroke='#c4c4c4' stroke-width='1' stroke-dasharray='3,3' stroke-dashoffset='0'/>
<line x1='415.5' y1='509' x2='415.5' y2='563' stroke='#c4c4c4' stroke-width='1' stroke-dasharray='3,3' stroke-dashoffset='0'/>
<line x1='454.5' y1='509' x2='454.5' y2='563' stroke='#c4c4c4' stroke-width='1' stroke-dasharray='3,3' stroke-dashoffset='0'/>
<line x1='481.5' y1='509' x2='481.5' y2='563' stroke='#c4c4c4' stroke-width='1' stroke-dasharray='3,3' stroke-dashoffset='0'/>
<line x1='498.5' y1='509' x2='498.5' y2='563' stroke='#c4c4c4' stroke-width='1' stroke-dasharray='3,3' stroke-dashoffset='0'/>
<line x1='519.5' y1='509' x2='519.5' y2='563' stroke='#c4c4c4' stroke-width='1' stroke-dasharray='3,3' stroke-dashoffset='0'/>
<line x1='541.5' y1='509' x2='541.5' y2='563' stroke='#c4c4c4' stroke-width='1' stroke-dasharray='3,3' stroke-dashoffset='0'/>
<line x1='563.5' y1='509' x2='563.5' y2='563' stroke='#c4c4c4' stroke-width='1' stroke-dasharray='3,3' stroke-dashoffset='0'/>
<line x1='602.5' y1='509' x2='602.5' y2='563' stroke='#c4c4c4' stroke-width='1' stroke-dasharray='3,3' stroke-dashoffset='0'/>
<line x1='635.5' y1='509' x2='635.5' y2='563' stroke='#c4c4c4' stroke-width='1' stroke-dasharray='3,3' stroke-dashoffset='0'/>
<line x1='651.5' y1='509' x2='651.5' y2='563' stroke='#c4c4c4' stroke-width='1' stroke-dasharray='3,3' stroke-dashoffset='0'/>
<line x1='673.5' y1='509' x2='673.5' y2='563' stroke='#c4c4c4' stroke-width='1' stroke-dasharray='3,3' stroke-dashoffset='0'/>
<line x1='695.5' y1='509' x2='695.5' y2='563' stroke='#c4c4c4' stroke-width='1' stroke-dasharray='3,3' stroke-dashoffset='0'/>
<line x1='717.5' y1='509' x2='717.5' y2='563' stroke='#c4c4c4' stroke-width='1' stroke-dasharray='3,3' stroke-dashoffset='0'/>
<line x1='744.5' y1='509' x2='744.5' y2='563' stroke='#c4c4c4' stroke-width='1' stroke-dasharray='3,3' stroke-dashoffset='0'/>
<line x1='772.5' y1='509' x2='772.5' y2='563' stroke='#c4c4c4' stroke-width='1' stroke-dasharray='3,3' stroke-dashoffset='0'/>
<line x1='788.5' y1='509' x2='788.5' y2='563' stroke='#c4c4c4' stroke-width='1' stroke-dasharray='3,3' stroke-dashoffset='0'/>
<line x1='810.5' y1='509' x2='810.5' y2='563' stroke='#c4c4c4' stroke-width='1' stroke-dasharray='3,3' stroke-dashoffset='0'/>
<line x1='832.5' y1='509' x2='832.5' y2='563' stroke='#c4c4c4' stroke-width='1' stroke-dasharray='3,3' stroke-dashoffset='0'/>
<line x1='854.5' y1='509' x2='854.5' y2='563' stroke='#c4c4c4' stroke-width='1' stroke-dasharray='3,3' stroke-dashoffset='0'/>
<line x1='887.5' y1='509' x2='887.5' y2='563' stroke='#c4c4c4' stroke-width='1' stroke-dasharray='3,3' stroke-dashoffset='0'/>
<line x1='914.5' y1='509' x2='914.5' y2='563' stroke='#c4c4c4' stroke-width='1' stroke-dasharray='3,3' stroke-dashoffset='0'/>
<line x1='931.5' y1='509' x2='931.5' y2='563' stroke='#c4c4c4' stroke-width='1' stroke-dasharray='3,3' stroke-dashoffset='0'/>
<line x1='953.5' y1='509' x2='953.5' y2='563' stroke='#c4c4c4' stroke-width='1' stroke-dasharray='3,3' stroke-dashoffset='0'/>
<line x1='974.5' y1='509' x2='974.5' y2='563' stroke='#c4c4c4' stroke-width='1' stroke-dasharray='3,3' stroke-dashoffset='0'/>
<line x1='996.5' y1='509' x2='996.5' y2='563' stroke='#c4c4c4' stroke-width='1' stroke-dasharray='3,3' stroke-dashoffset='0'/>
<line x1='1035.5' y1='509' x2='1035.5' y2='563' stroke='#c4c4c4' stroke-width='1' stroke-dasharray='3,3' stroke-dashoffset='0'/>
<line x1='1062.5' y1='509' x2='1062.5' y2='563' stroke='#c4c4c4' stroke-width='1' stroke-dasharray='3,3' stroke-dashoffset='0'/>
<line x1='1079.5' y1='509' x2='1079.5' y2='563' stroke='#c4c4c4' stroke-width='1' stroke-dasharray='3,3' stroke-dashoffset='0'/>
<line x1='1101.5' y1='509' x2='1101.5' y2='563' stroke='#c4c4c4' stroke-width='1' stroke-dasharray='3,3' stroke-dashoffset='0'/>
<line x1='1123.5' y1='509' x2='1123.5' y2='563' stroke='#c4c4c4' stroke-width='1' stroke-dasharray='3,3' stroke-dashoffset='0'/>
<line x1='1144.5' y1='509' x2='1144.5' y2='563' stroke='#c4c4c4' stroke-width='1' stroke-dasharray='3,3' stroke-dashoffset='0'/>
<line x1='1177.5' y1='509' x2='1177.5' y2='563' stroke='#c4c4c4' stroke-width='1' stroke-dasharray='3,3' stroke-dashoffset='0'/>
<line x1='1216.5' y1='509' x2='1216.5' y2='563' stroke='#c4c4c4' stroke-width='1' stroke-dasharray='3,3' stroke-dashoffset='0'/>
<line x1='1232.5' y1='509' x2='1232.5' y2='563' stroke='#c4c4c4' stroke-width='1' stroke-dasharray='3,3' stroke-dashoffset='0'/>
<line x1='1254.5' y1='509' x2='1254.5' y2='563' stroke='#c4c4c4' stroke-width='1' stroke-dasharray='3,3' stroke-dashoffset='0'/>
<line x1='1276.5' y1='509' x2='1276.5' y2='563' stroke='#c4c4c4' stroke-width='1' stroke-dasharray='3,3' stroke-dashoffset='0'/>
<line x1='53' y1='526.5' x2='1279' y2='526.5' stroke='#3a3a9a' stroke-width='1'/>
<line x1='53' y1='560.5' x2='1279' y2='560.5' stroke='#3a3a9a' stroke-width='1'/>
<line x1='50' y1='509.5' x2='51' y2='509.5' stroke='#000' stroke-width='1'/>
<line x1='1281' y1='509.5' x2='1283' y2='509.5' stroke='#000' stroke-width='1'/>
<line x1='50' y1='517.5' x2='51' y2='517.5' stroke='#000' stroke-width='1'/>
<line x1='1281' y1='517.5' x2='1283' y2='517.5' stroke='#000' stroke-width='1'/>
<line x1='50' y1='526.5' x2='51' y2='526.5' stroke='#000' stroke-width='1'/>
<line x1='1281' y1='526.5' x2='1283' y2='526.5' stroke='#000' stroke-width='1'/>
<line x1='50' y1='535.5' x2='51' y2='535.5' stroke='#000' stroke-width='1'/>
<line x1='1281' y1='535.5' x2='1283' y2='535.5' stroke='#000' stroke-width='1'/>
<line x1='46' y1='543.5' x2='51' y2='543.5' stroke='#000' stroke-width='1'/>
<line x1='1281' y1='543.5' x2='1286' y2='543.5' stroke='#000' stroke-width='1'/>
<line x1='50' y1='552.5' x2='51' y2='552.5' stroke='#000' stroke-width='1'/>
<line x1='1281' y1='552.5' x2='1283' y2='552.5' stroke='#000' stroke-width='1'/>
<line x1='50' y1='560.5' x2='51' y2='560.5' stroke='#000' stroke-width='1'/>
<line x1='1281' y1='560.5' x2='1283' y2='560.5' stroke='#000' stroke-width='1'/>
<text x='8' y='547' font-size='11' fill='#000' text-anchor='start' font-weight='normal' >50</text>
<text x='1324' y='547' font-size='11' fill='#000' text-anchor='end' font-weight='normal' >50</text>
<rect x='20' y='509.5' width='29' height='11' fill='#d04a1a' />
<text x='34.5' y='519' font-size='11' fill='#fff' text-anchor='middle' font-weight='normal' >83.90</text>
<rect x='1282' y='509.5' width='29' height='11' fill='#d04a1a' />
<text x='1296.5' y='519' font-size='11' fill='#fff' text-anchor='middle' font-weight='normal' >83.90</text>
<polyline points='53.3,552.1 58.3,552.4 64.9,548.8 69.8,547.1 75.6,551.2 80.6,548.8 86.3,547.6 92.9,547.1 98.7,545.5 104.5,544.6 108.6,554.2 114.4,544.3 119.4,545.5 125.1,546.3 130.9,538.9 137.5,536.7 145.8,536.4 152.4,537.2 159.0,538.9 165.6,540.5 173.9,544.6 180.5,543.0 190.4,538.0 200.3,535.1 202.8,535.6 212.7,549.9 221.8,553.7 229.2,559.0 235.0,556.5 240.0,556.2 248.2,547.9 256.4,539.7 264.7,537.2 273.3,533.9 279.0,544.6 289.4,551.2 300.5,536.0 304.6,533.4 311.2,530.1 317.8,531.8 322.8,533.1 326.9,532.3 333.5,535.6 337.7,533.4 343.4,532.3 350.9,530.6 355.0,529.4 363.3,529.4 371.5,531.1 377.3,530.3 390.5,530.3 397.1,528.6 403.7,530.1 410.3,529.4 415.3,530.1 421.9,531.1 430.2,529.4 437.6,532.3 443.4,531.1 453.3,533.9 459.9,539.4 464.8,540.0 471.4,532.7 476.4,530.6 480.0,530.1 488.3,528.9 492.4,527.3 498.2,526.8 503.9,524.5 513.0,524.0 515.5,523.2 519.6,523.2 525.4,529.8 530.4,532.3 537.8,532.6 541.9,533.9 551.8,536.0 557.6,533.4 564.2,537.7 569.2,539.4 574.1,537.2 579.9,538.4 587.3,538.9 592.3,540.0 602.2,546.0 608.0,534.4 614.6,535.6 619.6,537.2 624.5,540.5 629.5,539.4 634.4,538.4 640.2,544.6 650.9,550.4 657.6,552.6 661.7,551.6 668.3,546.3 672.4,548.3 678.2,544.6 684.0,540.5 688.1,539.4 694.7,538.0 701.6,533.4 706.6,534.4 711.5,537.2 716.5,540.5 721.4,542.7 728.0,539.7 733.8,535.6 738.8,536.4 743.7,534.7 749.5,532.7 755.8,527.3 761.1,531.4 766.0,534.4 771.8,531.4 776.8,530.6 782.5,529.8 789.1,532.3 794.1,535.6 799.9,539.7 804.8,537.7 810.6,540.0 815.6,542.7 822.2,538.4 827.1,537.2 837.0,537.2 842.0,538.4 848.6,540.0 854.4,538.4 860.2,543.3 864.3,541.7 870.1,540.5 876.7,543.0 884.9,545.5 893.2,551.6 903.1,559.2 911.4,552.1 919.9,547.1 925.7,543.3 930.6,546.3 936.4,552.1 941.4,552.4 947.2,551.2 952.9,548.3 957.9,550.4 964.5,547.1 969.5,548.3 979.4,548.3 986.0,545.1 994.2,544.6 1000.8,543.3 1005.8,544.3 1015.7,546.0 1024.0,548.3 1028.9,547.6 1033.9,549.6 1039.6,551.6 1044.6,550.4 1050.4,549.3 1057.0,546.3 1061.9,535.6 1066.9,534.4 1072.7,533.4 1078.5,536.4 1084.2,539.4 1090.8,534.4 1094.5,535.6 1101.2,532.3 1113.0,531.4 1122.9,530.1 1134.5,529.4 1144.4,527.8 1156.0,526.5 1169.2,525.1 1179.1,523.2 1195.6,521.5 1205.5,520.2 1217.1,519.0 1223.7,516.9 1231.9,516.2 1238.5,514.6 1248.5,514.2' fill='none' stroke='#d04010' stroke-width='1' stroke-linejoin='round' shape-rendering='crispEdges'/>
<line x1='1155.5' y1='510' x2='1155.5' y2='563' stroke='#3a3a8a' stroke-width='1'/>
<rect x='51' y='563' width='1229' height='2' fill='#9d4a4a' />
<line x1='51' y1='579.5' x2='1280' y2='579.5' stroke='#9d4a4a' stroke-width='1'/>
<rect x='51' y='563' width='2' height='17' fill='#9d4a4a' />
<line x1='1279.5' y1='563' x2='1279.5' y2='580' stroke='#9d4a4a' stroke-width='1'/>
<line x1='54.5' y1='564' x2='54.5' y2='569' stroke='#000' stroke-width='1'/>
<text x='57' y='577' font-size='12' fill='#000' text-anchor='start' font-weight='normal' >8</text>
<line x1='70.5' y1='564' x2='70.5' y2='569' stroke='#000' stroke-width='1'/>
<text x='73' y='577' font-size='12' fill='#000' text-anchor='start' font-weight='normal' >11</text>
<line x1='92.5' y1='564' x2='92.5' y2='569' stroke='#000' stroke-width='1'/>
<text x='95' y='577' font-size='12' fill='#000' text-anchor='start' font-weight='normal' >16</text>
<line x1='114.5' y1='564' x2='114.5' y2='569' stroke='#000' stroke-width='1'/>
<text x='117' y='577' font-size='12' fill='#000' text-anchor='start' font-weight='normal' >20</text>
<line x1='136.5' y1='564' x2='136.5' y2='569' stroke='#000' stroke-width='1'/>
<text x='139' y='577' font-size='12' fill='#000' text-anchor='start' font-weight='normal' >25</text>
<line x1='169.5' y1='563' x2='169.5' y2='579' stroke='#000' stroke-width='1'/>
<text x='172' y='577' font-size='12' fill='#000' text-anchor='start' font-weight='normal' >Jun</text>
<line x1='196.5' y1='564' x2='196.5' y2='569' stroke='#000' stroke-width='1'/>
<text x='199' y='577' font-size='12' fill='#000' text-anchor='start' font-weight='normal' >7</text>
<line x1='212.5' y1='564' x2='212.5' y2='569' stroke='#000' stroke-width='1'/>
<text x='215' y='577' font-size='12' fill='#000' text-anchor='start' font-weight='normal' >10</text>
<line x1='234.5' y1='564' x2='234.5' y2='569' stroke='#000' stroke-width='1'/>
<text x='237' y='577' font-size='12' fill='#000' text-anchor='start' font-weight='normal' >15</text>
<line x1='256.5' y1='564' x2='256.5' y2='569' stroke='#000' stroke-width='1'/>
<text x='259' y='577' font-size='12' fill='#000' text-anchor='start' font-weight='normal' >20</text>
<line x1='278.5' y1='564' x2='278.5' y2='569' stroke='#000' stroke-width='1'/>
<text x='281' y='577' font-size='12' fill='#000' text-anchor='start' font-weight='normal' >24</text>
<line x1='311.5' y1='563' x2='311.5' y2='579' stroke='#000' stroke-width='1'/>
<text x='314' y='577' font-size='12' fill='#000' text-anchor='start' font-weight='normal' >Jul</text>
<line x1='333.5' y1='564' x2='333.5' y2='569' stroke='#000' stroke-width='1'/>
<text x='336' y='577' font-size='12' fill='#000' text-anchor='start' font-weight='normal' >6</text>
<line x1='350.5' y1='564' x2='350.5' y2='569' stroke='#000' stroke-width='1'/>
<text x='353' y='577' font-size='12' fill='#000' text-anchor='start' font-weight='normal' >10</text>
<line x1='371.5' y1='564' x2='371.5' y2='569' stroke='#000' stroke-width='1'/>
<text x='374' y='577' font-size='12' fill='#000' text-anchor='start' font-weight='normal' >14</text>
<line x1='393.5' y1='564' x2='393.5' y2='569' stroke='#000' stroke-width='1'/>
<text x='396' y='577' font-size='12' fill='#000' text-anchor='start' font-weight='normal' >19</text>
<line x1='415.5' y1='564' x2='415.5' y2='569' stroke='#000' stroke-width='1'/>
<text x='418' y='577' font-size='12' fill='#000' text-anchor='start' font-weight='normal' >24</text>
<line x1='454.5' y1='563' x2='454.5' y2='579' stroke='#000' stroke-width='1'/>
<text x='457' y='577' font-size='12' fill='#000' text-anchor='start' font-weight='normal' >Ago</text>
<line x1='481.5' y1='564' x2='481.5' y2='569' stroke='#000' stroke-width='1'/>
<text x='484' y='577' font-size='12' fill='#000' text-anchor='start' font-weight='normal' >7</text>
<line x1='498.5' y1='564' x2='498.5' y2='569' stroke='#000' stroke-width='1'/>
<text x='501' y='577' font-size='12' fill='#000' text-anchor='start' font-weight='normal' >10</text>
<line x1='519.5' y1='564' x2='519.5' y2='569' stroke='#000' stroke-width='1'/>
<text x='522' y='577' font-size='12' fill='#000' text-anchor='start' font-weight='normal' >15</text>
<line x1='541.5' y1='564' x2='541.5' y2='569' stroke='#000' stroke-width='1'/>
<text x='544' y='577' font-size='12' fill='#000' text-anchor='start' font-weight='normal' >19</text>
<line x1='563.5' y1='564' x2='563.5' y2='569' stroke='#000' stroke-width='1'/>
<text x='566' y='577' font-size='12' fill='#000' text-anchor='start' font-weight='normal' >24</text>
<line x1='602.5' y1='563' x2='602.5' y2='579' stroke='#000' stroke-width='1'/>
<text x='605' y='577' font-size='12' fill='#000' text-anchor='start' font-weight='normal' >Sep</text>
<line x1='635.5' y1='564' x2='635.5' y2='569' stroke='#000' stroke-width='1'/>
<text x='638' y='577' font-size='12' fill='#000' text-anchor='start' font-weight='normal' >8</text>
<line x1='651.5' y1='564' x2='651.5' y2='569' stroke='#000' stroke-width='1'/>
<text x='654' y='577' font-size='12' fill='#000' text-anchor='start' font-weight='normal' >12</text>
<line x1='673.5' y1='564' x2='673.5' y2='569' stroke='#000' stroke-width='1'/>
<text x='676' y='577' font-size='12' fill='#000' text-anchor='start' font-weight='normal' >16</text>
<line x1='695.5' y1='564' x2='695.5' y2='569' stroke='#000' stroke-width='1'/>
<text x='698' y='577' font-size='12' fill='#000' text-anchor='start' font-weight='normal' >21</text>
<line x1='717.5' y1='564' x2='717.5' y2='569' stroke='#000' stroke-width='1'/>
<text x='720' y='577' font-size='12' fill='#000' text-anchor='start' font-weight='normal' >26</text>
<line x1='744.5' y1='563' x2='744.5' y2='579' stroke='#000' stroke-width='1'/>
<text x='747' y='577' font-size='12' fill='#000' text-anchor='start' font-weight='normal' >Oct</text>
<line x1='772.5' y1='564' x2='772.5' y2='569' stroke='#000' stroke-width='1'/>
<text x='775' y='577' font-size='12' fill='#000' text-anchor='start' font-weight='normal' >7</text>
<line x1='788.5' y1='564' x2='788.5' y2='569' stroke='#000' stroke-width='1'/>
<text x='791' y='577' font-size='12' fill='#000' text-anchor='start' font-weight='normal' >11</text>
<line x1='810.5' y1='564' x2='810.5' y2='569' stroke='#000' stroke-width='1'/>
<text x='813' y='577' font-size='12' fill='#000' text-anchor='start' font-weight='normal' >16</text>
<line x1='832.5' y1='564' x2='832.5' y2='569' stroke='#000' stroke-width='1'/>
<text x='835' y='577' font-size='12' fill='#000' text-anchor='start' font-weight='normal' >20</text>
<line x1='854.5' y1='564' x2='854.5' y2='569' stroke='#000' stroke-width='1'/>
<text x='857' y='577' font-size='12' fill='#000' text-anchor='start' font-weight='normal' >25</text>
<line x1='887.5' y1='563' x2='887.5' y2='579' stroke='#000' stroke-width='1'/>
<text x='890' y='577' font-size='12' fill='#000' text-anchor='start' font-weight='normal' >Nov</text>
<line x1='914.5' y1='564' x2='914.5' y2='569' stroke='#000' stroke-width='1'/>
<text x='917' y='577' font-size='12' fill='#000' text-anchor='start' font-weight='normal' >7</text>
<line x1='931.5' y1='564' x2='931.5' y2='569' stroke='#000' stroke-width='1'/>
<text x='934' y='577' font-size='12' fill='#000' text-anchor='start' font-weight='normal' >10</text>
<line x1='953.5' y1='564' x2='953.5' y2='569' stroke='#000' stroke-width='1'/>
<text x='956' y='577' font-size='12' fill='#000' text-anchor='start' font-weight='normal' >15</text>
<line x1='974.5' y1='564' x2='974.5' y2='569' stroke='#000' stroke-width='1'/>
<text x='977' y='577' font-size='12' fill='#000' text-anchor='start' font-weight='normal' >20</text>
<line x1='996.5' y1='564' x2='996.5' y2='569' stroke='#000' stroke-width='1'/>
<text x='999' y='577' font-size='12' fill='#000' text-anchor='start' font-weight='normal' >24</text>
<line x1='1035.5' y1='563' x2='1035.5' y2='579' stroke='#000' stroke-width='1'/>
<text x='1038' y='577' font-size='12' fill='#000' text-anchor='start' font-weight='normal' >Dic</text>
<line x1='1062.5' y1='564' x2='1062.5' y2='569' stroke='#000' stroke-width='1'/>
<text x='1065' y='577' font-size='12' fill='#000' text-anchor='start' font-weight='normal' >7</text>
<line x1='1079.5' y1='564' x2='1079.5' y2='569' stroke='#000' stroke-width='1'/>
<text x='1082' y='577' font-size='12' fill='#000' text-anchor='start' font-weight='normal' >11</text>
<line x1='1101.5' y1='564' x2='1101.5' y2='569' stroke='#000' stroke-width='1'/>
<text x='1104' y='577' font-size='12' fill='#000' text-anchor='start' font-weight='normal' >15</text>
<line x1='1123.5' y1='564' x2='1123.5' y2='569' stroke='#000' stroke-width='1'/>
<text x='1126' y='577' font-size='12' fill='#000' text-anchor='start' font-weight='normal' >20</text>
<line x1='1144.5' y1='564' x2='1144.5' y2='569' stroke='#000' stroke-width='1'/>
<text x='1147' y='577' font-size='12' fill='#000' text-anchor='start' font-weight='normal' >25</text>
<line x1='1177.5' y1='563' x2='1177.5' y2='579' stroke='#000' stroke-width='1'/>
<text x='1180' y='577' font-size='12' fill='#000' text-anchor='start' font-weight='normal' >2017</text>
<line x1='1216.5' y1='564' x2='1216.5' y2='569' stroke='#000' stroke-width='1'/>
<text x='1219' y='577' font-size='12' fill='#000' text-anchor='start' font-weight='normal' >9</text>
<line x1='1232.5' y1='564' x2='1232.5' y2='569' stroke='#000' stroke-width='1'/>
<text x='1235' y='577' font-size='12' fill='#000' text-anchor='start' font-weight='normal' >12</text>
<line x1='1254.5' y1='564' x2='1254.5' y2='569' stroke='#000' stroke-width='1'/>
<text x='1257' y='577' font-size='12' fill='#000' text-anchor='start' font-weight='normal' >17</text>
<line x1='1276.5' y1='564' x2='1276.5' y2='569' stroke='#000' stroke-width='1'/>
</svg></body></html>
